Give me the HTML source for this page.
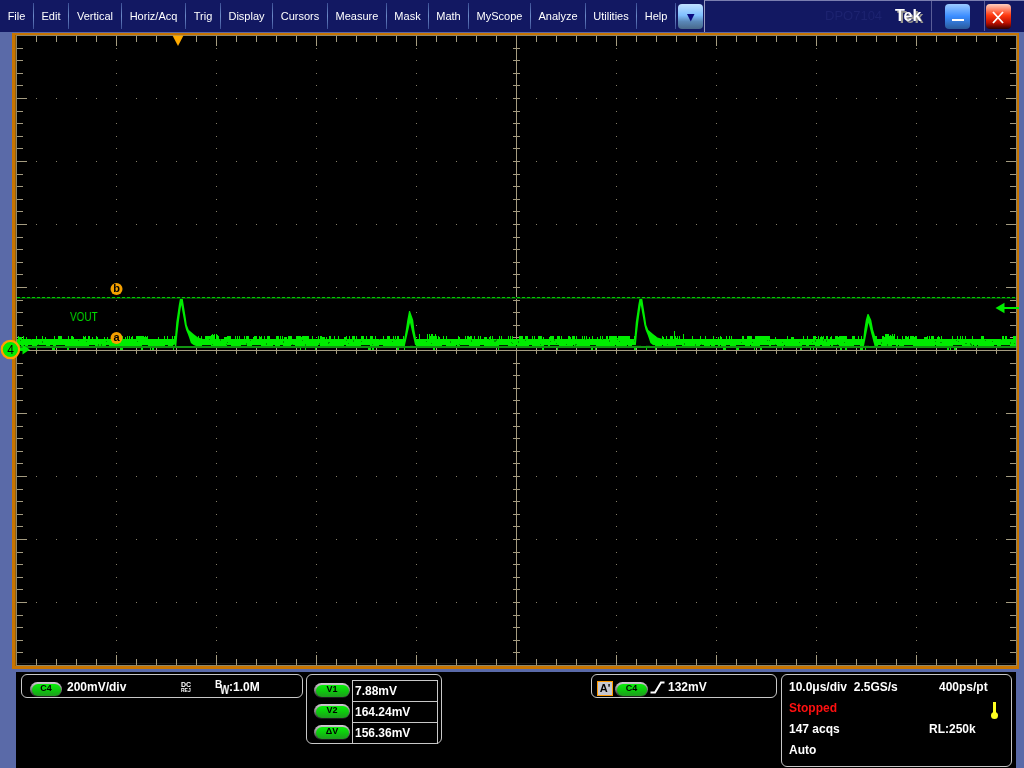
<!DOCTYPE html>
<html><head><meta charset="utf-8">
<style>
*{margin:0;padding:0;box-sizing:border-box}
html,body{width:1024px;height:768px;overflow:hidden;background:#5a6aa8;font-family:"Liberation Sans",sans-serif}
.a{position:absolute;white-space:nowrap;will-change:transform}
#menu{position:absolute;left:0;top:0;width:1024px;height:32px;background:#121862}
.mi{position:absolute;will-change:transform;top:0;height:32px;color:#fff;font-size:11px;line-height:32px;text-align:center}
.sep{position:absolute;top:3px;width:1px;height:26px;background:linear-gradient(#3c4f96,#6c8ac8 50%,#3c4f96)}
#rp{position:absolute;left:704px;top:0;width:320px;height:32px;border-top:1px solid #7a7eb0;border-left:1px solid #9a9cc0}
.wb{position:absolute;top:4px;width:25px;height:25px;border-radius:4px}
#frame{position:absolute;left:12px;top:33px;width:1007px;height:636px;background:#c77400}
#scr{position:absolute;left:16px;top:35px;width:1001px;height:631px;background:#000}
#bot{position:absolute;left:16px;top:672px;width:1000px;height:96px;background:#000}
.box{position:absolute;border:1px solid #c8c8c8;border-radius:6px}
.pill{position:absolute;height:15px;border-radius:8px;background:linear-gradient(#d4ccd4,#a8a4a8 30%,#585858 70%,#141414);padding:2px 1.5px 1px 1.5px}
.pill b{display:block;will-change:transform;height:12px;border-radius:6px;background:linear-gradient(#08f008,#10c010 60%,#209a20);color:#000;font-size:9px;font-weight:bold;text-align:center;line-height:9.5px;text-indent:-1px}
.t12{color:#fff;font-size:12px;font-weight:bold;line-height:12px}
svg{position:absolute;left:0;top:0}
</style></head><body>
<div id="menu">
<div class="mi" style="left:0;width:33px">File</div>
<div class="sep" style="left:33px"></div>
<div class="mi" style="left:34px;width:34px">Edit</div>
<div class="sep" style="left:68px"></div>
<div class="mi" style="left:69px;width:52px">Vertical</div>
<div class="sep" style="left:121px"></div>
<div class="mi" style="left:122px;width:63px">Horiz/Acq</div>
<div class="sep" style="left:185px"></div>
<div class="mi" style="left:186px;width:34px">Trig</div>
<div class="sep" style="left:220px"></div>
<div class="mi" style="left:221px;width:51px">Display</div>
<div class="sep" style="left:272px"></div>
<div class="mi" style="left:273px;width:54px">Cursors</div>
<div class="sep" style="left:327px"></div>
<div class="mi" style="left:328px;width:58px">Measure</div>
<div class="sep" style="left:386px"></div>
<div class="mi" style="left:387px;width:41px">Mask</div>
<div class="sep" style="left:428px"></div>
<div class="mi" style="left:429px;width:39px">Math</div>
<div class="sep" style="left:468px"></div>
<div class="mi" style="left:469px;width:61px">MyScope</div>
<div class="sep" style="left:530px"></div>
<div class="mi" style="left:531px;width:54px">Analyze</div>
<div class="sep" style="left:585px"></div>
<div class="mi" style="left:586px;width:50px">Utilities</div>
<div class="sep" style="left:636px"></div>
<div class="mi" style="left:637px;width:38px">Help</div>
<div class="sep" style="left:675px"></div>
<div class="wb" style="left:678px;background:linear-gradient(#c0e0ff,#80c0ff 45%,#5a88b8 70%,#48688a)"></div>
<svg width="1024" height="32"><polygon points="687,14 694.5,14 690.75,21.5" fill="#0a0a80"/></svg>
<div id="rp"></div>
<div class="a" style="left:825px;top:8px;font-size:13px;color:#1d2370;line-height:16px">DPO7104</div>
<div class="a" style="left:896.5px;top:10px;font-size:16px;font-weight:bold;color:#9a9890;line-height:16px">Tek</div>
<div class="a" style="left:894.5px;top:8px;font-size:16px;font-weight:bold;color:#fff;line-height:16px">Tek</div>
<div class="sep" style="left:931px;top:1px;height:30px;background:#5a5e98"></div>
<div class="sep" style="left:984px;top:1px;height:30px;background:#5a5e98"></div>
<div class="wb" style="left:945px;background:linear-gradient(#9ccaff,#3a8cff 50%,#2a5a9a)"></div>
<div class="a" style="left:952px;top:19px;width:12px;height:2px;background:#fff"></div>
<div class="wb" style="left:986px;background:linear-gradient(#ffd0c0,#ff3a10 45%,#c01000 75%,#300000)"></div>
<svg width="1024" height="32"><path d="M993,12 L1003,23 M1003,12 L993,23" stroke="#fff" stroke-width="1.8"/></svg>
</div>
<div id="frame"></div>
<div id="scr"></div>
<div id="bot"></div>
<svg width="1024" height="768" shape-rendering="crispEdges">
<rect x="16" y="35" width="1001" height="1" fill="#8f8668"/>
<rect x="16" y="665" width="1001" height="1" fill="#8f8668"/>
<rect x="16" y="35" width="1" height="631" fill="#8f8668"/>
<rect x="1016" y="35" width="1" height="631" fill="#8f8668"/>
<rect x="17" y="663" width="999" height="1" fill="#161616"/>
<rect x="15" y="35" width="1" height="631" fill="#94600c"/>
<rect x="16" y="350" width="1001" height="1" fill="#a59c80"/>
<rect x="516" y="35" width="1" height="631" fill="#a59c80"/>
<rect x="36" y="36" width="1" height="6" fill="#a59c80"/>
<rect x="36" y="659" width="1" height="6" fill="#a59c80"/>
<rect x="36" y="347" width="1" height="7" fill="#a59c80"/>
<rect x="56" y="36" width="1" height="6" fill="#a59c80"/>
<rect x="56" y="659" width="1" height="6" fill="#a59c80"/>
<rect x="56" y="347" width="1" height="7" fill="#a59c80"/>
<rect x="76" y="36" width="1" height="6" fill="#a59c80"/>
<rect x="76" y="659" width="1" height="6" fill="#a59c80"/>
<rect x="76" y="347" width="1" height="7" fill="#a59c80"/>
<rect x="96" y="36" width="1" height="6" fill="#a59c80"/>
<rect x="96" y="659" width="1" height="6" fill="#a59c80"/>
<rect x="96" y="347" width="1" height="7" fill="#a59c80"/>
<rect x="116" y="36" width="1" height="10" fill="#a59c80"/>
<rect x="116" y="655" width="1" height="10" fill="#a59c80"/>
<rect x="116" y="347" width="1" height="7" fill="#a59c80"/>
<rect x="136" y="36" width="1" height="6" fill="#a59c80"/>
<rect x="136" y="659" width="1" height="6" fill="#a59c80"/>
<rect x="136" y="347" width="1" height="7" fill="#a59c80"/>
<rect x="156" y="36" width="1" height="6" fill="#a59c80"/>
<rect x="156" y="659" width="1" height="6" fill="#a59c80"/>
<rect x="156" y="347" width="1" height="7" fill="#a59c80"/>
<rect x="176" y="36" width="1" height="6" fill="#a59c80"/>
<rect x="176" y="659" width="1" height="6" fill="#a59c80"/>
<rect x="176" y="347" width="1" height="7" fill="#a59c80"/>
<rect x="196" y="36" width="1" height="6" fill="#a59c80"/>
<rect x="196" y="659" width="1" height="6" fill="#a59c80"/>
<rect x="196" y="347" width="1" height="7" fill="#a59c80"/>
<rect x="216" y="36" width="1" height="10" fill="#a59c80"/>
<rect x="216" y="655" width="1" height="10" fill="#a59c80"/>
<rect x="216" y="347" width="1" height="7" fill="#a59c80"/>
<rect x="236" y="36" width="1" height="6" fill="#a59c80"/>
<rect x="236" y="659" width="1" height="6" fill="#a59c80"/>
<rect x="236" y="347" width="1" height="7" fill="#a59c80"/>
<rect x="256" y="36" width="1" height="6" fill="#a59c80"/>
<rect x="256" y="659" width="1" height="6" fill="#a59c80"/>
<rect x="256" y="347" width="1" height="7" fill="#a59c80"/>
<rect x="276" y="36" width="1" height="6" fill="#a59c80"/>
<rect x="276" y="659" width="1" height="6" fill="#a59c80"/>
<rect x="276" y="347" width="1" height="7" fill="#a59c80"/>
<rect x="296" y="36" width="1" height="6" fill="#a59c80"/>
<rect x="296" y="659" width="1" height="6" fill="#a59c80"/>
<rect x="296" y="347" width="1" height="7" fill="#a59c80"/>
<rect x="316" y="36" width="1" height="10" fill="#a59c80"/>
<rect x="316" y="655" width="1" height="10" fill="#a59c80"/>
<rect x="316" y="347" width="1" height="7" fill="#a59c80"/>
<rect x="336" y="36" width="1" height="6" fill="#a59c80"/>
<rect x="336" y="659" width="1" height="6" fill="#a59c80"/>
<rect x="336" y="347" width="1" height="7" fill="#a59c80"/>
<rect x="356" y="36" width="1" height="6" fill="#a59c80"/>
<rect x="356" y="659" width="1" height="6" fill="#a59c80"/>
<rect x="356" y="347" width="1" height="7" fill="#a59c80"/>
<rect x="376" y="36" width="1" height="6" fill="#a59c80"/>
<rect x="376" y="659" width="1" height="6" fill="#a59c80"/>
<rect x="376" y="347" width="1" height="7" fill="#a59c80"/>
<rect x="396" y="36" width="1" height="6" fill="#a59c80"/>
<rect x="396" y="659" width="1" height="6" fill="#a59c80"/>
<rect x="396" y="347" width="1" height="7" fill="#a59c80"/>
<rect x="416" y="36" width="1" height="10" fill="#a59c80"/>
<rect x="416" y="655" width="1" height="10" fill="#a59c80"/>
<rect x="416" y="347" width="1" height="7" fill="#a59c80"/>
<rect x="436" y="36" width="1" height="6" fill="#a59c80"/>
<rect x="436" y="659" width="1" height="6" fill="#a59c80"/>
<rect x="436" y="347" width="1" height="7" fill="#a59c80"/>
<rect x="456" y="36" width="1" height="6" fill="#a59c80"/>
<rect x="456" y="659" width="1" height="6" fill="#a59c80"/>
<rect x="456" y="347" width="1" height="7" fill="#a59c80"/>
<rect x="476" y="36" width="1" height="6" fill="#a59c80"/>
<rect x="476" y="659" width="1" height="6" fill="#a59c80"/>
<rect x="476" y="347" width="1" height="7" fill="#a59c80"/>
<rect x="496" y="36" width="1" height="6" fill="#a59c80"/>
<rect x="496" y="659" width="1" height="6" fill="#a59c80"/>
<rect x="496" y="347" width="1" height="7" fill="#a59c80"/>
<rect x="516" y="36" width="1" height="10" fill="#a59c80"/>
<rect x="516" y="655" width="1" height="10" fill="#a59c80"/>
<rect x="536" y="36" width="1" height="6" fill="#a59c80"/>
<rect x="536" y="659" width="1" height="6" fill="#a59c80"/>
<rect x="536" y="347" width="1" height="7" fill="#a59c80"/>
<rect x="556" y="36" width="1" height="6" fill="#a59c80"/>
<rect x="556" y="659" width="1" height="6" fill="#a59c80"/>
<rect x="556" y="347" width="1" height="7" fill="#a59c80"/>
<rect x="576" y="36" width="1" height="6" fill="#a59c80"/>
<rect x="576" y="659" width="1" height="6" fill="#a59c80"/>
<rect x="576" y="347" width="1" height="7" fill="#a59c80"/>
<rect x="596" y="36" width="1" height="6" fill="#a59c80"/>
<rect x="596" y="659" width="1" height="6" fill="#a59c80"/>
<rect x="596" y="347" width="1" height="7" fill="#a59c80"/>
<rect x="616" y="36" width="1" height="10" fill="#a59c80"/>
<rect x="616" y="655" width="1" height="10" fill="#a59c80"/>
<rect x="616" y="347" width="1" height="7" fill="#a59c80"/>
<rect x="636" y="36" width="1" height="6" fill="#a59c80"/>
<rect x="636" y="659" width="1" height="6" fill="#a59c80"/>
<rect x="636" y="347" width="1" height="7" fill="#a59c80"/>
<rect x="656" y="36" width="1" height="6" fill="#a59c80"/>
<rect x="656" y="659" width="1" height="6" fill="#a59c80"/>
<rect x="656" y="347" width="1" height="7" fill="#a59c80"/>
<rect x="676" y="36" width="1" height="6" fill="#a59c80"/>
<rect x="676" y="659" width="1" height="6" fill="#a59c80"/>
<rect x="676" y="347" width="1" height="7" fill="#a59c80"/>
<rect x="696" y="36" width="1" height="6" fill="#a59c80"/>
<rect x="696" y="659" width="1" height="6" fill="#a59c80"/>
<rect x="696" y="347" width="1" height="7" fill="#a59c80"/>
<rect x="716" y="36" width="1" height="10" fill="#a59c80"/>
<rect x="716" y="655" width="1" height="10" fill="#a59c80"/>
<rect x="716" y="347" width="1" height="7" fill="#a59c80"/>
<rect x="736" y="36" width="1" height="6" fill="#a59c80"/>
<rect x="736" y="659" width="1" height="6" fill="#a59c80"/>
<rect x="736" y="347" width="1" height="7" fill="#a59c80"/>
<rect x="756" y="36" width="1" height="6" fill="#a59c80"/>
<rect x="756" y="659" width="1" height="6" fill="#a59c80"/>
<rect x="756" y="347" width="1" height="7" fill="#a59c80"/>
<rect x="776" y="36" width="1" height="6" fill="#a59c80"/>
<rect x="776" y="659" width="1" height="6" fill="#a59c80"/>
<rect x="776" y="347" width="1" height="7" fill="#a59c80"/>
<rect x="796" y="36" width="1" height="6" fill="#a59c80"/>
<rect x="796" y="659" width="1" height="6" fill="#a59c80"/>
<rect x="796" y="347" width="1" height="7" fill="#a59c80"/>
<rect x="816" y="36" width="1" height="10" fill="#a59c80"/>
<rect x="816" y="655" width="1" height="10" fill="#a59c80"/>
<rect x="816" y="347" width="1" height="7" fill="#a59c80"/>
<rect x="836" y="36" width="1" height="6" fill="#a59c80"/>
<rect x="836" y="659" width="1" height="6" fill="#a59c80"/>
<rect x="836" y="347" width="1" height="7" fill="#a59c80"/>
<rect x="856" y="36" width="1" height="6" fill="#a59c80"/>
<rect x="856" y="659" width="1" height="6" fill="#a59c80"/>
<rect x="856" y="347" width="1" height="7" fill="#a59c80"/>
<rect x="876" y="36" width="1" height="6" fill="#a59c80"/>
<rect x="876" y="659" width="1" height="6" fill="#a59c80"/>
<rect x="876" y="347" width="1" height="7" fill="#a59c80"/>
<rect x="896" y="36" width="1" height="6" fill="#a59c80"/>
<rect x="896" y="659" width="1" height="6" fill="#a59c80"/>
<rect x="896" y="347" width="1" height="7" fill="#a59c80"/>
<rect x="916" y="36" width="1" height="10" fill="#a59c80"/>
<rect x="916" y="655" width="1" height="10" fill="#a59c80"/>
<rect x="916" y="347" width="1" height="7" fill="#a59c80"/>
<rect x="936" y="36" width="1" height="6" fill="#a59c80"/>
<rect x="936" y="659" width="1" height="6" fill="#a59c80"/>
<rect x="936" y="347" width="1" height="7" fill="#a59c80"/>
<rect x="956" y="36" width="1" height="6" fill="#a59c80"/>
<rect x="956" y="659" width="1" height="6" fill="#a59c80"/>
<rect x="956" y="347" width="1" height="7" fill="#a59c80"/>
<rect x="976" y="36" width="1" height="6" fill="#a59c80"/>
<rect x="976" y="659" width="1" height="6" fill="#a59c80"/>
<rect x="976" y="347" width="1" height="7" fill="#a59c80"/>
<rect x="996" y="36" width="1" height="6" fill="#a59c80"/>
<rect x="996" y="659" width="1" height="6" fill="#a59c80"/>
<rect x="996" y="347" width="1" height="7" fill="#a59c80"/>
<rect x="17" y="48" width="6" height="1" fill="#a59c80"/>
<rect x="1010" y="48" width="6" height="1" fill="#a59c80"/>
<rect x="513" y="48" width="7" height="1" fill="#a59c80"/>
<rect x="17" y="60" width="6" height="1" fill="#a59c80"/>
<rect x="1010" y="60" width="6" height="1" fill="#a59c80"/>
<rect x="513" y="60" width="7" height="1" fill="#a59c80"/>
<rect x="17" y="73" width="6" height="1" fill="#a59c80"/>
<rect x="1010" y="73" width="6" height="1" fill="#a59c80"/>
<rect x="513" y="73" width="7" height="1" fill="#a59c80"/>
<rect x="17" y="85" width="6" height="1" fill="#a59c80"/>
<rect x="1010" y="85" width="6" height="1" fill="#a59c80"/>
<rect x="513" y="85" width="7" height="1" fill="#a59c80"/>
<rect x="17" y="98" width="10" height="1" fill="#a59c80"/>
<rect x="1006" y="98" width="10" height="1" fill="#a59c80"/>
<rect x="513" y="98" width="7" height="1" fill="#a59c80"/>
<rect x="17" y="111" width="6" height="1" fill="#a59c80"/>
<rect x="1010" y="111" width="6" height="1" fill="#a59c80"/>
<rect x="513" y="111" width="7" height="1" fill="#a59c80"/>
<rect x="17" y="123" width="6" height="1" fill="#a59c80"/>
<rect x="1010" y="123" width="6" height="1" fill="#a59c80"/>
<rect x="513" y="123" width="7" height="1" fill="#a59c80"/>
<rect x="17" y="136" width="6" height="1" fill="#a59c80"/>
<rect x="1010" y="136" width="6" height="1" fill="#a59c80"/>
<rect x="513" y="136" width="7" height="1" fill="#a59c80"/>
<rect x="17" y="148" width="6" height="1" fill="#a59c80"/>
<rect x="1010" y="148" width="6" height="1" fill="#a59c80"/>
<rect x="513" y="148" width="7" height="1" fill="#a59c80"/>
<rect x="17" y="161" width="10" height="1" fill="#a59c80"/>
<rect x="1006" y="161" width="10" height="1" fill="#a59c80"/>
<rect x="513" y="161" width="7" height="1" fill="#a59c80"/>
<rect x="17" y="174" width="6" height="1" fill="#a59c80"/>
<rect x="1010" y="174" width="6" height="1" fill="#a59c80"/>
<rect x="513" y="174" width="7" height="1" fill="#a59c80"/>
<rect x="17" y="186" width="6" height="1" fill="#a59c80"/>
<rect x="1010" y="186" width="6" height="1" fill="#a59c80"/>
<rect x="513" y="186" width="7" height="1" fill="#a59c80"/>
<rect x="17" y="199" width="6" height="1" fill="#a59c80"/>
<rect x="1010" y="199" width="6" height="1" fill="#a59c80"/>
<rect x="513" y="199" width="7" height="1" fill="#a59c80"/>
<rect x="17" y="211" width="6" height="1" fill="#a59c80"/>
<rect x="1010" y="211" width="6" height="1" fill="#a59c80"/>
<rect x="513" y="211" width="7" height="1" fill="#a59c80"/>
<rect x="17" y="224" width="10" height="1" fill="#a59c80"/>
<rect x="1006" y="224" width="10" height="1" fill="#a59c80"/>
<rect x="513" y="224" width="7" height="1" fill="#a59c80"/>
<rect x="17" y="237" width="6" height="1" fill="#a59c80"/>
<rect x="1010" y="237" width="6" height="1" fill="#a59c80"/>
<rect x="513" y="237" width="7" height="1" fill="#a59c80"/>
<rect x="17" y="249" width="6" height="1" fill="#a59c80"/>
<rect x="1010" y="249" width="6" height="1" fill="#a59c80"/>
<rect x="513" y="249" width="7" height="1" fill="#a59c80"/>
<rect x="17" y="262" width="6" height="1" fill="#a59c80"/>
<rect x="1010" y="262" width="6" height="1" fill="#a59c80"/>
<rect x="513" y="262" width="7" height="1" fill="#a59c80"/>
<rect x="17" y="274" width="6" height="1" fill="#a59c80"/>
<rect x="1010" y="274" width="6" height="1" fill="#a59c80"/>
<rect x="513" y="274" width="7" height="1" fill="#a59c80"/>
<rect x="17" y="287" width="10" height="1" fill="#a59c80"/>
<rect x="1006" y="287" width="10" height="1" fill="#a59c80"/>
<rect x="513" y="287" width="7" height="1" fill="#a59c80"/>
<rect x="17" y="300" width="6" height="1" fill="#a59c80"/>
<rect x="1010" y="300" width="6" height="1" fill="#a59c80"/>
<rect x="513" y="300" width="7" height="1" fill="#a59c80"/>
<rect x="17" y="312" width="6" height="1" fill="#a59c80"/>
<rect x="1010" y="312" width="6" height="1" fill="#a59c80"/>
<rect x="513" y="312" width="7" height="1" fill="#a59c80"/>
<rect x="17" y="325" width="6" height="1" fill="#a59c80"/>
<rect x="1010" y="325" width="6" height="1" fill="#a59c80"/>
<rect x="513" y="325" width="7" height="1" fill="#a59c80"/>
<rect x="17" y="337" width="6" height="1" fill="#a59c80"/>
<rect x="1010" y="337" width="6" height="1" fill="#a59c80"/>
<rect x="513" y="337" width="7" height="1" fill="#a59c80"/>
<rect x="17" y="350" width="10" height="1" fill="#a59c80"/>
<rect x="1006" y="350" width="10" height="1" fill="#a59c80"/>
<rect x="17" y="363" width="6" height="1" fill="#a59c80"/>
<rect x="1010" y="363" width="6" height="1" fill="#a59c80"/>
<rect x="513" y="363" width="7" height="1" fill="#a59c80"/>
<rect x="17" y="375" width="6" height="1" fill="#a59c80"/>
<rect x="1010" y="375" width="6" height="1" fill="#a59c80"/>
<rect x="513" y="375" width="7" height="1" fill="#a59c80"/>
<rect x="17" y="388" width="6" height="1" fill="#a59c80"/>
<rect x="1010" y="388" width="6" height="1" fill="#a59c80"/>
<rect x="513" y="388" width="7" height="1" fill="#a59c80"/>
<rect x="17" y="400" width="6" height="1" fill="#a59c80"/>
<rect x="1010" y="400" width="6" height="1" fill="#a59c80"/>
<rect x="513" y="400" width="7" height="1" fill="#a59c80"/>
<rect x="17" y="413" width="10" height="1" fill="#a59c80"/>
<rect x="1006" y="413" width="10" height="1" fill="#a59c80"/>
<rect x="513" y="413" width="7" height="1" fill="#a59c80"/>
<rect x="17" y="426" width="6" height="1" fill="#a59c80"/>
<rect x="1010" y="426" width="6" height="1" fill="#a59c80"/>
<rect x="513" y="426" width="7" height="1" fill="#a59c80"/>
<rect x="17" y="438" width="6" height="1" fill="#a59c80"/>
<rect x="1010" y="438" width="6" height="1" fill="#a59c80"/>
<rect x="513" y="438" width="7" height="1" fill="#a59c80"/>
<rect x="17" y="451" width="6" height="1" fill="#a59c80"/>
<rect x="1010" y="451" width="6" height="1" fill="#a59c80"/>
<rect x="513" y="451" width="7" height="1" fill="#a59c80"/>
<rect x="17" y="463" width="6" height="1" fill="#a59c80"/>
<rect x="1010" y="463" width="6" height="1" fill="#a59c80"/>
<rect x="513" y="463" width="7" height="1" fill="#a59c80"/>
<rect x="17" y="476" width="10" height="1" fill="#a59c80"/>
<rect x="1006" y="476" width="10" height="1" fill="#a59c80"/>
<rect x="513" y="476" width="7" height="1" fill="#a59c80"/>
<rect x="17" y="489" width="6" height="1" fill="#a59c80"/>
<rect x="1010" y="489" width="6" height="1" fill="#a59c80"/>
<rect x="513" y="489" width="7" height="1" fill="#a59c80"/>
<rect x="17" y="501" width="6" height="1" fill="#a59c80"/>
<rect x="1010" y="501" width="6" height="1" fill="#a59c80"/>
<rect x="513" y="501" width="7" height="1" fill="#a59c80"/>
<rect x="17" y="514" width="6" height="1" fill="#a59c80"/>
<rect x="1010" y="514" width="6" height="1" fill="#a59c80"/>
<rect x="513" y="514" width="7" height="1" fill="#a59c80"/>
<rect x="17" y="526" width="6" height="1" fill="#a59c80"/>
<rect x="1010" y="526" width="6" height="1" fill="#a59c80"/>
<rect x="513" y="526" width="7" height="1" fill="#a59c80"/>
<rect x="17" y="539" width="10" height="1" fill="#a59c80"/>
<rect x="1006" y="539" width="10" height="1" fill="#a59c80"/>
<rect x="513" y="539" width="7" height="1" fill="#a59c80"/>
<rect x="17" y="552" width="6" height="1" fill="#a59c80"/>
<rect x="1010" y="552" width="6" height="1" fill="#a59c80"/>
<rect x="513" y="552" width="7" height="1" fill="#a59c80"/>
<rect x="17" y="564" width="6" height="1" fill="#a59c80"/>
<rect x="1010" y="564" width="6" height="1" fill="#a59c80"/>
<rect x="513" y="564" width="7" height="1" fill="#a59c80"/>
<rect x="17" y="577" width="6" height="1" fill="#a59c80"/>
<rect x="1010" y="577" width="6" height="1" fill="#a59c80"/>
<rect x="513" y="577" width="7" height="1" fill="#a59c80"/>
<rect x="17" y="589" width="6" height="1" fill="#a59c80"/>
<rect x="1010" y="589" width="6" height="1" fill="#a59c80"/>
<rect x="513" y="589" width="7" height="1" fill="#a59c80"/>
<rect x="17" y="602" width="10" height="1" fill="#a59c80"/>
<rect x="1006" y="602" width="10" height="1" fill="#a59c80"/>
<rect x="513" y="602" width="7" height="1" fill="#a59c80"/>
<rect x="17" y="615" width="6" height="1" fill="#a59c80"/>
<rect x="1010" y="615" width="6" height="1" fill="#a59c80"/>
<rect x="513" y="615" width="7" height="1" fill="#a59c80"/>
<rect x="17" y="627" width="6" height="1" fill="#a59c80"/>
<rect x="1010" y="627" width="6" height="1" fill="#a59c80"/>
<rect x="513" y="627" width="7" height="1" fill="#a59c80"/>
<rect x="17" y="640" width="6" height="1" fill="#a59c80"/>
<rect x="1010" y="640" width="6" height="1" fill="#a59c80"/>
<rect x="513" y="640" width="7" height="1" fill="#a59c80"/>
<rect x="17" y="652" width="6" height="1" fill="#a59c80"/>
<rect x="1010" y="652" width="6" height="1" fill="#a59c80"/>
<rect x="513" y="652" width="7" height="1" fill="#a59c80"/>
<rect x="116" y="48" width="1" height="1" fill="#a59c80" fill-opacity="0.8"/>
<rect x="116" y="60" width="1" height="1" fill="#a59c80" fill-opacity="0.8"/>
<rect x="116" y="73" width="1" height="1" fill="#a59c80" fill-opacity="0.8"/>
<rect x="116" y="85" width="1" height="1" fill="#a59c80" fill-opacity="0.8"/>
<rect x="116" y="111" width="1" height="1" fill="#a59c80" fill-opacity="0.8"/>
<rect x="116" y="123" width="1" height="1" fill="#a59c80" fill-opacity="0.8"/>
<rect x="116" y="136" width="1" height="1" fill="#a59c80" fill-opacity="0.8"/>
<rect x="116" y="148" width="1" height="1" fill="#a59c80" fill-opacity="0.8"/>
<rect x="116" y="174" width="1" height="1" fill="#a59c80" fill-opacity="0.8"/>
<rect x="116" y="186" width="1" height="1" fill="#a59c80" fill-opacity="0.8"/>
<rect x="116" y="199" width="1" height="1" fill="#a59c80" fill-opacity="0.8"/>
<rect x="116" y="211" width="1" height="1" fill="#a59c80" fill-opacity="0.8"/>
<rect x="116" y="237" width="1" height="1" fill="#a59c80" fill-opacity="0.8"/>
<rect x="116" y="249" width="1" height="1" fill="#a59c80" fill-opacity="0.8"/>
<rect x="116" y="262" width="1" height="1" fill="#a59c80" fill-opacity="0.8"/>
<rect x="116" y="274" width="1" height="1" fill="#a59c80" fill-opacity="0.8"/>
<rect x="116" y="300" width="1" height="1" fill="#a59c80" fill-opacity="0.8"/>
<rect x="116" y="312" width="1" height="1" fill="#a59c80" fill-opacity="0.8"/>
<rect x="116" y="325" width="1" height="1" fill="#a59c80" fill-opacity="0.8"/>
<rect x="116" y="337" width="1" height="1" fill="#a59c80" fill-opacity="0.8"/>
<rect x="116" y="350" width="1" height="1" fill="#a59c80" fill-opacity="0.8"/>
<rect x="116" y="363" width="1" height="1" fill="#a59c80" fill-opacity="0.8"/>
<rect x="116" y="375" width="1" height="1" fill="#a59c80" fill-opacity="0.8"/>
<rect x="116" y="388" width="1" height="1" fill="#a59c80" fill-opacity="0.8"/>
<rect x="116" y="400" width="1" height="1" fill="#a59c80" fill-opacity="0.8"/>
<rect x="116" y="426" width="1" height="1" fill="#a59c80" fill-opacity="0.8"/>
<rect x="116" y="438" width="1" height="1" fill="#a59c80" fill-opacity="0.8"/>
<rect x="116" y="451" width="1" height="1" fill="#a59c80" fill-opacity="0.8"/>
<rect x="116" y="463" width="1" height="1" fill="#a59c80" fill-opacity="0.8"/>
<rect x="116" y="489" width="1" height="1" fill="#a59c80" fill-opacity="0.8"/>
<rect x="116" y="501" width="1" height="1" fill="#a59c80" fill-opacity="0.8"/>
<rect x="116" y="514" width="1" height="1" fill="#a59c80" fill-opacity="0.8"/>
<rect x="116" y="526" width="1" height="1" fill="#a59c80" fill-opacity="0.8"/>
<rect x="116" y="552" width="1" height="1" fill="#a59c80" fill-opacity="0.8"/>
<rect x="116" y="564" width="1" height="1" fill="#a59c80" fill-opacity="0.8"/>
<rect x="116" y="577" width="1" height="1" fill="#a59c80" fill-opacity="0.8"/>
<rect x="116" y="589" width="1" height="1" fill="#a59c80" fill-opacity="0.8"/>
<rect x="116" y="615" width="1" height="1" fill="#a59c80" fill-opacity="0.8"/>
<rect x="116" y="627" width="1" height="1" fill="#a59c80" fill-opacity="0.8"/>
<rect x="116" y="640" width="1" height="1" fill="#a59c80" fill-opacity="0.8"/>
<rect x="116" y="652" width="1" height="1" fill="#a59c80" fill-opacity="0.8"/>
<rect x="216" y="48" width="1" height="1" fill="#a59c80" fill-opacity="0.8"/>
<rect x="216" y="60" width="1" height="1" fill="#a59c80" fill-opacity="0.8"/>
<rect x="216" y="73" width="1" height="1" fill="#a59c80" fill-opacity="0.8"/>
<rect x="216" y="85" width="1" height="1" fill="#a59c80" fill-opacity="0.8"/>
<rect x="216" y="111" width="1" height="1" fill="#a59c80" fill-opacity="0.8"/>
<rect x="216" y="123" width="1" height="1" fill="#a59c80" fill-opacity="0.8"/>
<rect x="216" y="136" width="1" height="1" fill="#a59c80" fill-opacity="0.8"/>
<rect x="216" y="148" width="1" height="1" fill="#a59c80" fill-opacity="0.8"/>
<rect x="216" y="174" width="1" height="1" fill="#a59c80" fill-opacity="0.8"/>
<rect x="216" y="186" width="1" height="1" fill="#a59c80" fill-opacity="0.8"/>
<rect x="216" y="199" width="1" height="1" fill="#a59c80" fill-opacity="0.8"/>
<rect x="216" y="211" width="1" height="1" fill="#a59c80" fill-opacity="0.8"/>
<rect x="216" y="237" width="1" height="1" fill="#a59c80" fill-opacity="0.8"/>
<rect x="216" y="249" width="1" height="1" fill="#a59c80" fill-opacity="0.8"/>
<rect x="216" y="262" width="1" height="1" fill="#a59c80" fill-opacity="0.8"/>
<rect x="216" y="274" width="1" height="1" fill="#a59c80" fill-opacity="0.8"/>
<rect x="216" y="300" width="1" height="1" fill="#a59c80" fill-opacity="0.8"/>
<rect x="216" y="312" width="1" height="1" fill="#a59c80" fill-opacity="0.8"/>
<rect x="216" y="325" width="1" height="1" fill="#a59c80" fill-opacity="0.8"/>
<rect x="216" y="337" width="1" height="1" fill="#a59c80" fill-opacity="0.8"/>
<rect x="216" y="350" width="1" height="1" fill="#a59c80" fill-opacity="0.8"/>
<rect x="216" y="363" width="1" height="1" fill="#a59c80" fill-opacity="0.8"/>
<rect x="216" y="375" width="1" height="1" fill="#a59c80" fill-opacity="0.8"/>
<rect x="216" y="388" width="1" height="1" fill="#a59c80" fill-opacity="0.8"/>
<rect x="216" y="400" width="1" height="1" fill="#a59c80" fill-opacity="0.8"/>
<rect x="216" y="426" width="1" height="1" fill="#a59c80" fill-opacity="0.8"/>
<rect x="216" y="438" width="1" height="1" fill="#a59c80" fill-opacity="0.8"/>
<rect x="216" y="451" width="1" height="1" fill="#a59c80" fill-opacity="0.8"/>
<rect x="216" y="463" width="1" height="1" fill="#a59c80" fill-opacity="0.8"/>
<rect x="216" y="489" width="1" height="1" fill="#a59c80" fill-opacity="0.8"/>
<rect x="216" y="501" width="1" height="1" fill="#a59c80" fill-opacity="0.8"/>
<rect x="216" y="514" width="1" height="1" fill="#a59c80" fill-opacity="0.8"/>
<rect x="216" y="526" width="1" height="1" fill="#a59c80" fill-opacity="0.8"/>
<rect x="216" y="552" width="1" height="1" fill="#a59c80" fill-opacity="0.8"/>
<rect x="216" y="564" width="1" height="1" fill="#a59c80" fill-opacity="0.8"/>
<rect x="216" y="577" width="1" height="1" fill="#a59c80" fill-opacity="0.8"/>
<rect x="216" y="589" width="1" height="1" fill="#a59c80" fill-opacity="0.8"/>
<rect x="216" y="615" width="1" height="1" fill="#a59c80" fill-opacity="0.8"/>
<rect x="216" y="627" width="1" height="1" fill="#a59c80" fill-opacity="0.8"/>
<rect x="216" y="640" width="1" height="1" fill="#a59c80" fill-opacity="0.8"/>
<rect x="216" y="652" width="1" height="1" fill="#a59c80" fill-opacity="0.8"/>
<rect x="316" y="48" width="1" height="1" fill="#a59c80" fill-opacity="0.8"/>
<rect x="316" y="60" width="1" height="1" fill="#a59c80" fill-opacity="0.8"/>
<rect x="316" y="73" width="1" height="1" fill="#a59c80" fill-opacity="0.8"/>
<rect x="316" y="85" width="1" height="1" fill="#a59c80" fill-opacity="0.8"/>
<rect x="316" y="111" width="1" height="1" fill="#a59c80" fill-opacity="0.8"/>
<rect x="316" y="123" width="1" height="1" fill="#a59c80" fill-opacity="0.8"/>
<rect x="316" y="136" width="1" height="1" fill="#a59c80" fill-opacity="0.8"/>
<rect x="316" y="148" width="1" height="1" fill="#a59c80" fill-opacity="0.8"/>
<rect x="316" y="174" width="1" height="1" fill="#a59c80" fill-opacity="0.8"/>
<rect x="316" y="186" width="1" height="1" fill="#a59c80" fill-opacity="0.8"/>
<rect x="316" y="199" width="1" height="1" fill="#a59c80" fill-opacity="0.8"/>
<rect x="316" y="211" width="1" height="1" fill="#a59c80" fill-opacity="0.8"/>
<rect x="316" y="237" width="1" height="1" fill="#a59c80" fill-opacity="0.8"/>
<rect x="316" y="249" width="1" height="1" fill="#a59c80" fill-opacity="0.8"/>
<rect x="316" y="262" width="1" height="1" fill="#a59c80" fill-opacity="0.8"/>
<rect x="316" y="274" width="1" height="1" fill="#a59c80" fill-opacity="0.8"/>
<rect x="316" y="300" width="1" height="1" fill="#a59c80" fill-opacity="0.8"/>
<rect x="316" y="312" width="1" height="1" fill="#a59c80" fill-opacity="0.8"/>
<rect x="316" y="325" width="1" height="1" fill="#a59c80" fill-opacity="0.8"/>
<rect x="316" y="337" width="1" height="1" fill="#a59c80" fill-opacity="0.8"/>
<rect x="316" y="350" width="1" height="1" fill="#a59c80" fill-opacity="0.8"/>
<rect x="316" y="363" width="1" height="1" fill="#a59c80" fill-opacity="0.8"/>
<rect x="316" y="375" width="1" height="1" fill="#a59c80" fill-opacity="0.8"/>
<rect x="316" y="388" width="1" height="1" fill="#a59c80" fill-opacity="0.8"/>
<rect x="316" y="400" width="1" height="1" fill="#a59c80" fill-opacity="0.8"/>
<rect x="316" y="426" width="1" height="1" fill="#a59c80" fill-opacity="0.8"/>
<rect x="316" y="438" width="1" height="1" fill="#a59c80" fill-opacity="0.8"/>
<rect x="316" y="451" width="1" height="1" fill="#a59c80" fill-opacity="0.8"/>
<rect x="316" y="463" width="1" height="1" fill="#a59c80" fill-opacity="0.8"/>
<rect x="316" y="489" width="1" height="1" fill="#a59c80" fill-opacity="0.8"/>
<rect x="316" y="501" width="1" height="1" fill="#a59c80" fill-opacity="0.8"/>
<rect x="316" y="514" width="1" height="1" fill="#a59c80" fill-opacity="0.8"/>
<rect x="316" y="526" width="1" height="1" fill="#a59c80" fill-opacity="0.8"/>
<rect x="316" y="552" width="1" height="1" fill="#a59c80" fill-opacity="0.8"/>
<rect x="316" y="564" width="1" height="1" fill="#a59c80" fill-opacity="0.8"/>
<rect x="316" y="577" width="1" height="1" fill="#a59c80" fill-opacity="0.8"/>
<rect x="316" y="589" width="1" height="1" fill="#a59c80" fill-opacity="0.8"/>
<rect x="316" y="615" width="1" height="1" fill="#a59c80" fill-opacity="0.8"/>
<rect x="316" y="627" width="1" height="1" fill="#a59c80" fill-opacity="0.8"/>
<rect x="316" y="640" width="1" height="1" fill="#a59c80" fill-opacity="0.8"/>
<rect x="316" y="652" width="1" height="1" fill="#a59c80" fill-opacity="0.8"/>
<rect x="416" y="48" width="1" height="1" fill="#a59c80" fill-opacity="0.8"/>
<rect x="416" y="60" width="1" height="1" fill="#a59c80" fill-opacity="0.8"/>
<rect x="416" y="73" width="1" height="1" fill="#a59c80" fill-opacity="0.8"/>
<rect x="416" y="85" width="1" height="1" fill="#a59c80" fill-opacity="0.8"/>
<rect x="416" y="111" width="1" height="1" fill="#a59c80" fill-opacity="0.8"/>
<rect x="416" y="123" width="1" height="1" fill="#a59c80" fill-opacity="0.8"/>
<rect x="416" y="136" width="1" height="1" fill="#a59c80" fill-opacity="0.8"/>
<rect x="416" y="148" width="1" height="1" fill="#a59c80" fill-opacity="0.8"/>
<rect x="416" y="174" width="1" height="1" fill="#a59c80" fill-opacity="0.8"/>
<rect x="416" y="186" width="1" height="1" fill="#a59c80" fill-opacity="0.8"/>
<rect x="416" y="199" width="1" height="1" fill="#a59c80" fill-opacity="0.8"/>
<rect x="416" y="211" width="1" height="1" fill="#a59c80" fill-opacity="0.8"/>
<rect x="416" y="237" width="1" height="1" fill="#a59c80" fill-opacity="0.8"/>
<rect x="416" y="249" width="1" height="1" fill="#a59c80" fill-opacity="0.8"/>
<rect x="416" y="262" width="1" height="1" fill="#a59c80" fill-opacity="0.8"/>
<rect x="416" y="274" width="1" height="1" fill="#a59c80" fill-opacity="0.8"/>
<rect x="416" y="300" width="1" height="1" fill="#a59c80" fill-opacity="0.8"/>
<rect x="416" y="312" width="1" height="1" fill="#a59c80" fill-opacity="0.8"/>
<rect x="416" y="325" width="1" height="1" fill="#a59c80" fill-opacity="0.8"/>
<rect x="416" y="337" width="1" height="1" fill="#a59c80" fill-opacity="0.8"/>
<rect x="416" y="350" width="1" height="1" fill="#a59c80" fill-opacity="0.8"/>
<rect x="416" y="363" width="1" height="1" fill="#a59c80" fill-opacity="0.8"/>
<rect x="416" y="375" width="1" height="1" fill="#a59c80" fill-opacity="0.8"/>
<rect x="416" y="388" width="1" height="1" fill="#a59c80" fill-opacity="0.8"/>
<rect x="416" y="400" width="1" height="1" fill="#a59c80" fill-opacity="0.8"/>
<rect x="416" y="426" width="1" height="1" fill="#a59c80" fill-opacity="0.8"/>
<rect x="416" y="438" width="1" height="1" fill="#a59c80" fill-opacity="0.8"/>
<rect x="416" y="451" width="1" height="1" fill="#a59c80" fill-opacity="0.8"/>
<rect x="416" y="463" width="1" height="1" fill="#a59c80" fill-opacity="0.8"/>
<rect x="416" y="489" width="1" height="1" fill="#a59c80" fill-opacity="0.8"/>
<rect x="416" y="501" width="1" height="1" fill="#a59c80" fill-opacity="0.8"/>
<rect x="416" y="514" width="1" height="1" fill="#a59c80" fill-opacity="0.8"/>
<rect x="416" y="526" width="1" height="1" fill="#a59c80" fill-opacity="0.8"/>
<rect x="416" y="552" width="1" height="1" fill="#a59c80" fill-opacity="0.8"/>
<rect x="416" y="564" width="1" height="1" fill="#a59c80" fill-opacity="0.8"/>
<rect x="416" y="577" width="1" height="1" fill="#a59c80" fill-opacity="0.8"/>
<rect x="416" y="589" width="1" height="1" fill="#a59c80" fill-opacity="0.8"/>
<rect x="416" y="615" width="1" height="1" fill="#a59c80" fill-opacity="0.8"/>
<rect x="416" y="627" width="1" height="1" fill="#a59c80" fill-opacity="0.8"/>
<rect x="416" y="640" width="1" height="1" fill="#a59c80" fill-opacity="0.8"/>
<rect x="416" y="652" width="1" height="1" fill="#a59c80" fill-opacity="0.8"/>
<rect x="616" y="48" width="1" height="1" fill="#a59c80" fill-opacity="0.8"/>
<rect x="616" y="60" width="1" height="1" fill="#a59c80" fill-opacity="0.8"/>
<rect x="616" y="73" width="1" height="1" fill="#a59c80" fill-opacity="0.8"/>
<rect x="616" y="85" width="1" height="1" fill="#a59c80" fill-opacity="0.8"/>
<rect x="616" y="111" width="1" height="1" fill="#a59c80" fill-opacity="0.8"/>
<rect x="616" y="123" width="1" height="1" fill="#a59c80" fill-opacity="0.8"/>
<rect x="616" y="136" width="1" height="1" fill="#a59c80" fill-opacity="0.8"/>
<rect x="616" y="148" width="1" height="1" fill="#a59c80" fill-opacity="0.8"/>
<rect x="616" y="174" width="1" height="1" fill="#a59c80" fill-opacity="0.8"/>
<rect x="616" y="186" width="1" height="1" fill="#a59c80" fill-opacity="0.8"/>
<rect x="616" y="199" width="1" height="1" fill="#a59c80" fill-opacity="0.8"/>
<rect x="616" y="211" width="1" height="1" fill="#a59c80" fill-opacity="0.8"/>
<rect x="616" y="237" width="1" height="1" fill="#a59c80" fill-opacity="0.8"/>
<rect x="616" y="249" width="1" height="1" fill="#a59c80" fill-opacity="0.8"/>
<rect x="616" y="262" width="1" height="1" fill="#a59c80" fill-opacity="0.8"/>
<rect x="616" y="274" width="1" height="1" fill="#a59c80" fill-opacity="0.8"/>
<rect x="616" y="300" width="1" height="1" fill="#a59c80" fill-opacity="0.8"/>
<rect x="616" y="312" width="1" height="1" fill="#a59c80" fill-opacity="0.8"/>
<rect x="616" y="325" width="1" height="1" fill="#a59c80" fill-opacity="0.8"/>
<rect x="616" y="337" width="1" height="1" fill="#a59c80" fill-opacity="0.8"/>
<rect x="616" y="350" width="1" height="1" fill="#a59c80" fill-opacity="0.8"/>
<rect x="616" y="363" width="1" height="1" fill="#a59c80" fill-opacity="0.8"/>
<rect x="616" y="375" width="1" height="1" fill="#a59c80" fill-opacity="0.8"/>
<rect x="616" y="388" width="1" height="1" fill="#a59c80" fill-opacity="0.8"/>
<rect x="616" y="400" width="1" height="1" fill="#a59c80" fill-opacity="0.8"/>
<rect x="616" y="426" width="1" height="1" fill="#a59c80" fill-opacity="0.8"/>
<rect x="616" y="438" width="1" height="1" fill="#a59c80" fill-opacity="0.8"/>
<rect x="616" y="451" width="1" height="1" fill="#a59c80" fill-opacity="0.8"/>
<rect x="616" y="463" width="1" height="1" fill="#a59c80" fill-opacity="0.8"/>
<rect x="616" y="489" width="1" height="1" fill="#a59c80" fill-opacity="0.8"/>
<rect x="616" y="501" width="1" height="1" fill="#a59c80" fill-opacity="0.8"/>
<rect x="616" y="514" width="1" height="1" fill="#a59c80" fill-opacity="0.8"/>
<rect x="616" y="526" width="1" height="1" fill="#a59c80" fill-opacity="0.8"/>
<rect x="616" y="552" width="1" height="1" fill="#a59c80" fill-opacity="0.8"/>
<rect x="616" y="564" width="1" height="1" fill="#a59c80" fill-opacity="0.8"/>
<rect x="616" y="577" width="1" height="1" fill="#a59c80" fill-opacity="0.8"/>
<rect x="616" y="589" width="1" height="1" fill="#a59c80" fill-opacity="0.8"/>
<rect x="616" y="615" width="1" height="1" fill="#a59c80" fill-opacity="0.8"/>
<rect x="616" y="627" width="1" height="1" fill="#a59c80" fill-opacity="0.8"/>
<rect x="616" y="640" width="1" height="1" fill="#a59c80" fill-opacity="0.8"/>
<rect x="616" y="652" width="1" height="1" fill="#a59c80" fill-opacity="0.8"/>
<rect x="716" y="48" width="1" height="1" fill="#a59c80" fill-opacity="0.8"/>
<rect x="716" y="60" width="1" height="1" fill="#a59c80" fill-opacity="0.8"/>
<rect x="716" y="73" width="1" height="1" fill="#a59c80" fill-opacity="0.8"/>
<rect x="716" y="85" width="1" height="1" fill="#a59c80" fill-opacity="0.8"/>
<rect x="716" y="111" width="1" height="1" fill="#a59c80" fill-opacity="0.8"/>
<rect x="716" y="123" width="1" height="1" fill="#a59c80" fill-opacity="0.8"/>
<rect x="716" y="136" width="1" height="1" fill="#a59c80" fill-opacity="0.8"/>
<rect x="716" y="148" width="1" height="1" fill="#a59c80" fill-opacity="0.8"/>
<rect x="716" y="174" width="1" height="1" fill="#a59c80" fill-opacity="0.8"/>
<rect x="716" y="186" width="1" height="1" fill="#a59c80" fill-opacity="0.8"/>
<rect x="716" y="199" width="1" height="1" fill="#a59c80" fill-opacity="0.8"/>
<rect x="716" y="211" width="1" height="1" fill="#a59c80" fill-opacity="0.8"/>
<rect x="716" y="237" width="1" height="1" fill="#a59c80" fill-opacity="0.8"/>
<rect x="716" y="249" width="1" height="1" fill="#a59c80" fill-opacity="0.8"/>
<rect x="716" y="262" width="1" height="1" fill="#a59c80" fill-opacity="0.8"/>
<rect x="716" y="274" width="1" height="1" fill="#a59c80" fill-opacity="0.8"/>
<rect x="716" y="300" width="1" height="1" fill="#a59c80" fill-opacity="0.8"/>
<rect x="716" y="312" width="1" height="1" fill="#a59c80" fill-opacity="0.8"/>
<rect x="716" y="325" width="1" height="1" fill="#a59c80" fill-opacity="0.8"/>
<rect x="716" y="337" width="1" height="1" fill="#a59c80" fill-opacity="0.8"/>
<rect x="716" y="350" width="1" height="1" fill="#a59c80" fill-opacity="0.8"/>
<rect x="716" y="363" width="1" height="1" fill="#a59c80" fill-opacity="0.8"/>
<rect x="716" y="375" width="1" height="1" fill="#a59c80" fill-opacity="0.8"/>
<rect x="716" y="388" width="1" height="1" fill="#a59c80" fill-opacity="0.8"/>
<rect x="716" y="400" width="1" height="1" fill="#a59c80" fill-opacity="0.8"/>
<rect x="716" y="426" width="1" height="1" fill="#a59c80" fill-opacity="0.8"/>
<rect x="716" y="438" width="1" height="1" fill="#a59c80" fill-opacity="0.8"/>
<rect x="716" y="451" width="1" height="1" fill="#a59c80" fill-opacity="0.8"/>
<rect x="716" y="463" width="1" height="1" fill="#a59c80" fill-opacity="0.8"/>
<rect x="716" y="489" width="1" height="1" fill="#a59c80" fill-opacity="0.8"/>
<rect x="716" y="501" width="1" height="1" fill="#a59c80" fill-opacity="0.8"/>
<rect x="716" y="514" width="1" height="1" fill="#a59c80" fill-opacity="0.8"/>
<rect x="716" y="526" width="1" height="1" fill="#a59c80" fill-opacity="0.8"/>
<rect x="716" y="552" width="1" height="1" fill="#a59c80" fill-opacity="0.8"/>
<rect x="716" y="564" width="1" height="1" fill="#a59c80" fill-opacity="0.8"/>
<rect x="716" y="577" width="1" height="1" fill="#a59c80" fill-opacity="0.8"/>
<rect x="716" y="589" width="1" height="1" fill="#a59c80" fill-opacity="0.8"/>
<rect x="716" y="615" width="1" height="1" fill="#a59c80" fill-opacity="0.8"/>
<rect x="716" y="627" width="1" height="1" fill="#a59c80" fill-opacity="0.8"/>
<rect x="716" y="640" width="1" height="1" fill="#a59c80" fill-opacity="0.8"/>
<rect x="716" y="652" width="1" height="1" fill="#a59c80" fill-opacity="0.8"/>
<rect x="816" y="48" width="1" height="1" fill="#a59c80" fill-opacity="0.8"/>
<rect x="816" y="60" width="1" height="1" fill="#a59c80" fill-opacity="0.8"/>
<rect x="816" y="73" width="1" height="1" fill="#a59c80" fill-opacity="0.8"/>
<rect x="816" y="85" width="1" height="1" fill="#a59c80" fill-opacity="0.8"/>
<rect x="816" y="111" width="1" height="1" fill="#a59c80" fill-opacity="0.8"/>
<rect x="816" y="123" width="1" height="1" fill="#a59c80" fill-opacity="0.8"/>
<rect x="816" y="136" width="1" height="1" fill="#a59c80" fill-opacity="0.8"/>
<rect x="816" y="148" width="1" height="1" fill="#a59c80" fill-opacity="0.8"/>
<rect x="816" y="174" width="1" height="1" fill="#a59c80" fill-opacity="0.8"/>
<rect x="816" y="186" width="1" height="1" fill="#a59c80" fill-opacity="0.8"/>
<rect x="816" y="199" width="1" height="1" fill="#a59c80" fill-opacity="0.8"/>
<rect x="816" y="211" width="1" height="1" fill="#a59c80" fill-opacity="0.8"/>
<rect x="816" y="237" width="1" height="1" fill="#a59c80" fill-opacity="0.8"/>
<rect x="816" y="249" width="1" height="1" fill="#a59c80" fill-opacity="0.8"/>
<rect x="816" y="262" width="1" height="1" fill="#a59c80" fill-opacity="0.8"/>
<rect x="816" y="274" width="1" height="1" fill="#a59c80" fill-opacity="0.8"/>
<rect x="816" y="300" width="1" height="1" fill="#a59c80" fill-opacity="0.8"/>
<rect x="816" y="312" width="1" height="1" fill="#a59c80" fill-opacity="0.8"/>
<rect x="816" y="325" width="1" height="1" fill="#a59c80" fill-opacity="0.8"/>
<rect x="816" y="337" width="1" height="1" fill="#a59c80" fill-opacity="0.8"/>
<rect x="816" y="350" width="1" height="1" fill="#a59c80" fill-opacity="0.8"/>
<rect x="816" y="363" width="1" height="1" fill="#a59c80" fill-opacity="0.8"/>
<rect x="816" y="375" width="1" height="1" fill="#a59c80" fill-opacity="0.8"/>
<rect x="816" y="388" width="1" height="1" fill="#a59c80" fill-opacity="0.8"/>
<rect x="816" y="400" width="1" height="1" fill="#a59c80" fill-opacity="0.8"/>
<rect x="816" y="426" width="1" height="1" fill="#a59c80" fill-opacity="0.8"/>
<rect x="816" y="438" width="1" height="1" fill="#a59c80" fill-opacity="0.8"/>
<rect x="816" y="451" width="1" height="1" fill="#a59c80" fill-opacity="0.8"/>
<rect x="816" y="463" width="1" height="1" fill="#a59c80" fill-opacity="0.8"/>
<rect x="816" y="489" width="1" height="1" fill="#a59c80" fill-opacity="0.8"/>
<rect x="816" y="501" width="1" height="1" fill="#a59c80" fill-opacity="0.8"/>
<rect x="816" y="514" width="1" height="1" fill="#a59c80" fill-opacity="0.8"/>
<rect x="816" y="526" width="1" height="1" fill="#a59c80" fill-opacity="0.8"/>
<rect x="816" y="552" width="1" height="1" fill="#a59c80" fill-opacity="0.8"/>
<rect x="816" y="564" width="1" height="1" fill="#a59c80" fill-opacity="0.8"/>
<rect x="816" y="577" width="1" height="1" fill="#a59c80" fill-opacity="0.8"/>
<rect x="816" y="589" width="1" height="1" fill="#a59c80" fill-opacity="0.8"/>
<rect x="816" y="615" width="1" height="1" fill="#a59c80" fill-opacity="0.8"/>
<rect x="816" y="627" width="1" height="1" fill="#a59c80" fill-opacity="0.8"/>
<rect x="816" y="640" width="1" height="1" fill="#a59c80" fill-opacity="0.8"/>
<rect x="816" y="652" width="1" height="1" fill="#a59c80" fill-opacity="0.8"/>
<rect x="916" y="48" width="1" height="1" fill="#a59c80" fill-opacity="0.8"/>
<rect x="916" y="60" width="1" height="1" fill="#a59c80" fill-opacity="0.8"/>
<rect x="916" y="73" width="1" height="1" fill="#a59c80" fill-opacity="0.8"/>
<rect x="916" y="85" width="1" height="1" fill="#a59c80" fill-opacity="0.8"/>
<rect x="916" y="111" width="1" height="1" fill="#a59c80" fill-opacity="0.8"/>
<rect x="916" y="123" width="1" height="1" fill="#a59c80" fill-opacity="0.8"/>
<rect x="916" y="136" width="1" height="1" fill="#a59c80" fill-opacity="0.8"/>
<rect x="916" y="148" width="1" height="1" fill="#a59c80" fill-opacity="0.8"/>
<rect x="916" y="174" width="1" height="1" fill="#a59c80" fill-opacity="0.8"/>
<rect x="916" y="186" width="1" height="1" fill="#a59c80" fill-opacity="0.8"/>
<rect x="916" y="199" width="1" height="1" fill="#a59c80" fill-opacity="0.8"/>
<rect x="916" y="211" width="1" height="1" fill="#a59c80" fill-opacity="0.8"/>
<rect x="916" y="237" width="1" height="1" fill="#a59c80" fill-opacity="0.8"/>
<rect x="916" y="249" width="1" height="1" fill="#a59c80" fill-opacity="0.8"/>
<rect x="916" y="262" width="1" height="1" fill="#a59c80" fill-opacity="0.8"/>
<rect x="916" y="274" width="1" height="1" fill="#a59c80" fill-opacity="0.8"/>
<rect x="916" y="300" width="1" height="1" fill="#a59c80" fill-opacity="0.8"/>
<rect x="916" y="312" width="1" height="1" fill="#a59c80" fill-opacity="0.8"/>
<rect x="916" y="325" width="1" height="1" fill="#a59c80" fill-opacity="0.8"/>
<rect x="916" y="337" width="1" height="1" fill="#a59c80" fill-opacity="0.8"/>
<rect x="916" y="350" width="1" height="1" fill="#a59c80" fill-opacity="0.8"/>
<rect x="916" y="363" width="1" height="1" fill="#a59c80" fill-opacity="0.8"/>
<rect x="916" y="375" width="1" height="1" fill="#a59c80" fill-opacity="0.8"/>
<rect x="916" y="388" width="1" height="1" fill="#a59c80" fill-opacity="0.8"/>
<rect x="916" y="400" width="1" height="1" fill="#a59c80" fill-opacity="0.8"/>
<rect x="916" y="426" width="1" height="1" fill="#a59c80" fill-opacity="0.8"/>
<rect x="916" y="438" width="1" height="1" fill="#a59c80" fill-opacity="0.8"/>
<rect x="916" y="451" width="1" height="1" fill="#a59c80" fill-opacity="0.8"/>
<rect x="916" y="463" width="1" height="1" fill="#a59c80" fill-opacity="0.8"/>
<rect x="916" y="489" width="1" height="1" fill="#a59c80" fill-opacity="0.8"/>
<rect x="916" y="501" width="1" height="1" fill="#a59c80" fill-opacity="0.8"/>
<rect x="916" y="514" width="1" height="1" fill="#a59c80" fill-opacity="0.8"/>
<rect x="916" y="526" width="1" height="1" fill="#a59c80" fill-opacity="0.8"/>
<rect x="916" y="552" width="1" height="1" fill="#a59c80" fill-opacity="0.8"/>
<rect x="916" y="564" width="1" height="1" fill="#a59c80" fill-opacity="0.8"/>
<rect x="916" y="577" width="1" height="1" fill="#a59c80" fill-opacity="0.8"/>
<rect x="916" y="589" width="1" height="1" fill="#a59c80" fill-opacity="0.8"/>
<rect x="916" y="615" width="1" height="1" fill="#a59c80" fill-opacity="0.8"/>
<rect x="916" y="627" width="1" height="1" fill="#a59c80" fill-opacity="0.8"/>
<rect x="916" y="640" width="1" height="1" fill="#a59c80" fill-opacity="0.8"/>
<rect x="916" y="652" width="1" height="1" fill="#a59c80" fill-opacity="0.8"/>
<rect x="36" y="98" width="1" height="1" fill="#a59c80" fill-opacity="0.8"/>
<rect x="56" y="98" width="1" height="1" fill="#a59c80" fill-opacity="0.8"/>
<rect x="76" y="98" width="1" height="1" fill="#a59c80" fill-opacity="0.8"/>
<rect x="96" y="98" width="1" height="1" fill="#a59c80" fill-opacity="0.8"/>
<rect x="116" y="98" width="1" height="1" fill="#a59c80" fill-opacity="0.8"/>
<rect x="136" y="98" width="1" height="1" fill="#a59c80" fill-opacity="0.8"/>
<rect x="156" y="98" width="1" height="1" fill="#a59c80" fill-opacity="0.8"/>
<rect x="176" y="98" width="1" height="1" fill="#a59c80" fill-opacity="0.8"/>
<rect x="196" y="98" width="1" height="1" fill="#a59c80" fill-opacity="0.8"/>
<rect x="216" y="98" width="1" height="1" fill="#a59c80" fill-opacity="0.8"/>
<rect x="236" y="98" width="1" height="1" fill="#a59c80" fill-opacity="0.8"/>
<rect x="256" y="98" width="1" height="1" fill="#a59c80" fill-opacity="0.8"/>
<rect x="276" y="98" width="1" height="1" fill="#a59c80" fill-opacity="0.8"/>
<rect x="296" y="98" width="1" height="1" fill="#a59c80" fill-opacity="0.8"/>
<rect x="316" y="98" width="1" height="1" fill="#a59c80" fill-opacity="0.8"/>
<rect x="336" y="98" width="1" height="1" fill="#a59c80" fill-opacity="0.8"/>
<rect x="356" y="98" width="1" height="1" fill="#a59c80" fill-opacity="0.8"/>
<rect x="376" y="98" width="1" height="1" fill="#a59c80" fill-opacity="0.8"/>
<rect x="396" y="98" width="1" height="1" fill="#a59c80" fill-opacity="0.8"/>
<rect x="416" y="98" width="1" height="1" fill="#a59c80" fill-opacity="0.8"/>
<rect x="436" y="98" width="1" height="1" fill="#a59c80" fill-opacity="0.8"/>
<rect x="456" y="98" width="1" height="1" fill="#a59c80" fill-opacity="0.8"/>
<rect x="476" y="98" width="1" height="1" fill="#a59c80" fill-opacity="0.8"/>
<rect x="496" y="98" width="1" height="1" fill="#a59c80" fill-opacity="0.8"/>
<rect x="516" y="98" width="1" height="1" fill="#a59c80" fill-opacity="0.8"/>
<rect x="536" y="98" width="1" height="1" fill="#a59c80" fill-opacity="0.8"/>
<rect x="556" y="98" width="1" height="1" fill="#a59c80" fill-opacity="0.8"/>
<rect x="576" y="98" width="1" height="1" fill="#a59c80" fill-opacity="0.8"/>
<rect x="596" y="98" width="1" height="1" fill="#a59c80" fill-opacity="0.8"/>
<rect x="616" y="98" width="1" height="1" fill="#a59c80" fill-opacity="0.8"/>
<rect x="636" y="98" width="1" height="1" fill="#a59c80" fill-opacity="0.8"/>
<rect x="656" y="98" width="1" height="1" fill="#a59c80" fill-opacity="0.8"/>
<rect x="676" y="98" width="1" height="1" fill="#a59c80" fill-opacity="0.8"/>
<rect x="696" y="98" width="1" height="1" fill="#a59c80" fill-opacity="0.8"/>
<rect x="716" y="98" width="1" height="1" fill="#a59c80" fill-opacity="0.8"/>
<rect x="736" y="98" width="1" height="1" fill="#a59c80" fill-opacity="0.8"/>
<rect x="756" y="98" width="1" height="1" fill="#a59c80" fill-opacity="0.8"/>
<rect x="776" y="98" width="1" height="1" fill="#a59c80" fill-opacity="0.8"/>
<rect x="796" y="98" width="1" height="1" fill="#a59c80" fill-opacity="0.8"/>
<rect x="816" y="98" width="1" height="1" fill="#a59c80" fill-opacity="0.8"/>
<rect x="836" y="98" width="1" height="1" fill="#a59c80" fill-opacity="0.8"/>
<rect x="856" y="98" width="1" height="1" fill="#a59c80" fill-opacity="0.8"/>
<rect x="876" y="98" width="1" height="1" fill="#a59c80" fill-opacity="0.8"/>
<rect x="896" y="98" width="1" height="1" fill="#a59c80" fill-opacity="0.8"/>
<rect x="916" y="98" width="1" height="1" fill="#a59c80" fill-opacity="0.8"/>
<rect x="936" y="98" width="1" height="1" fill="#a59c80" fill-opacity="0.8"/>
<rect x="956" y="98" width="1" height="1" fill="#a59c80" fill-opacity="0.8"/>
<rect x="976" y="98" width="1" height="1" fill="#a59c80" fill-opacity="0.8"/>
<rect x="996" y="98" width="1" height="1" fill="#a59c80" fill-opacity="0.8"/>
<rect x="36" y="161" width="1" height="1" fill="#a59c80" fill-opacity="0.8"/>
<rect x="56" y="161" width="1" height="1" fill="#a59c80" fill-opacity="0.8"/>
<rect x="76" y="161" width="1" height="1" fill="#a59c80" fill-opacity="0.8"/>
<rect x="96" y="161" width="1" height="1" fill="#a59c80" fill-opacity="0.8"/>
<rect x="116" y="161" width="1" height="1" fill="#a59c80" fill-opacity="0.8"/>
<rect x="136" y="161" width="1" height="1" fill="#a59c80" fill-opacity="0.8"/>
<rect x="156" y="161" width="1" height="1" fill="#a59c80" fill-opacity="0.8"/>
<rect x="176" y="161" width="1" height="1" fill="#a59c80" fill-opacity="0.8"/>
<rect x="196" y="161" width="1" height="1" fill="#a59c80" fill-opacity="0.8"/>
<rect x="216" y="161" width="1" height="1" fill="#a59c80" fill-opacity="0.8"/>
<rect x="236" y="161" width="1" height="1" fill="#a59c80" fill-opacity="0.8"/>
<rect x="256" y="161" width="1" height="1" fill="#a59c80" fill-opacity="0.8"/>
<rect x="276" y="161" width="1" height="1" fill="#a59c80" fill-opacity="0.8"/>
<rect x="296" y="161" width="1" height="1" fill="#a59c80" fill-opacity="0.8"/>
<rect x="316" y="161" width="1" height="1" fill="#a59c80" fill-opacity="0.8"/>
<rect x="336" y="161" width="1" height="1" fill="#a59c80" fill-opacity="0.8"/>
<rect x="356" y="161" width="1" height="1" fill="#a59c80" fill-opacity="0.8"/>
<rect x="376" y="161" width="1" height="1" fill="#a59c80" fill-opacity="0.8"/>
<rect x="396" y="161" width="1" height="1" fill="#a59c80" fill-opacity="0.8"/>
<rect x="416" y="161" width="1" height="1" fill="#a59c80" fill-opacity="0.8"/>
<rect x="436" y="161" width="1" height="1" fill="#a59c80" fill-opacity="0.8"/>
<rect x="456" y="161" width="1" height="1" fill="#a59c80" fill-opacity="0.8"/>
<rect x="476" y="161" width="1" height="1" fill="#a59c80" fill-opacity="0.8"/>
<rect x="496" y="161" width="1" height="1" fill="#a59c80" fill-opacity="0.8"/>
<rect x="516" y="161" width="1" height="1" fill="#a59c80" fill-opacity="0.8"/>
<rect x="536" y="161" width="1" height="1" fill="#a59c80" fill-opacity="0.8"/>
<rect x="556" y="161" width="1" height="1" fill="#a59c80" fill-opacity="0.8"/>
<rect x="576" y="161" width="1" height="1" fill="#a59c80" fill-opacity="0.8"/>
<rect x="596" y="161" width="1" height="1" fill="#a59c80" fill-opacity="0.8"/>
<rect x="616" y="161" width="1" height="1" fill="#a59c80" fill-opacity="0.8"/>
<rect x="636" y="161" width="1" height="1" fill="#a59c80" fill-opacity="0.8"/>
<rect x="656" y="161" width="1" height="1" fill="#a59c80" fill-opacity="0.8"/>
<rect x="676" y="161" width="1" height="1" fill="#a59c80" fill-opacity="0.8"/>
<rect x="696" y="161" width="1" height="1" fill="#a59c80" fill-opacity="0.8"/>
<rect x="716" y="161" width="1" height="1" fill="#a59c80" fill-opacity="0.8"/>
<rect x="736" y="161" width="1" height="1" fill="#a59c80" fill-opacity="0.8"/>
<rect x="756" y="161" width="1" height="1" fill="#a59c80" fill-opacity="0.8"/>
<rect x="776" y="161" width="1" height="1" fill="#a59c80" fill-opacity="0.8"/>
<rect x="796" y="161" width="1" height="1" fill="#a59c80" fill-opacity="0.8"/>
<rect x="816" y="161" width="1" height="1" fill="#a59c80" fill-opacity="0.8"/>
<rect x="836" y="161" width="1" height="1" fill="#a59c80" fill-opacity="0.8"/>
<rect x="856" y="161" width="1" height="1" fill="#a59c80" fill-opacity="0.8"/>
<rect x="876" y="161" width="1" height="1" fill="#a59c80" fill-opacity="0.8"/>
<rect x="896" y="161" width="1" height="1" fill="#a59c80" fill-opacity="0.8"/>
<rect x="916" y="161" width="1" height="1" fill="#a59c80" fill-opacity="0.8"/>
<rect x="936" y="161" width="1" height="1" fill="#a59c80" fill-opacity="0.8"/>
<rect x="956" y="161" width="1" height="1" fill="#a59c80" fill-opacity="0.8"/>
<rect x="976" y="161" width="1" height="1" fill="#a59c80" fill-opacity="0.8"/>
<rect x="996" y="161" width="1" height="1" fill="#a59c80" fill-opacity="0.8"/>
<rect x="36" y="224" width="1" height="1" fill="#a59c80" fill-opacity="0.8"/>
<rect x="56" y="224" width="1" height="1" fill="#a59c80" fill-opacity="0.8"/>
<rect x="76" y="224" width="1" height="1" fill="#a59c80" fill-opacity="0.8"/>
<rect x="96" y="224" width="1" height="1" fill="#a59c80" fill-opacity="0.8"/>
<rect x="116" y="224" width="1" height="1" fill="#a59c80" fill-opacity="0.8"/>
<rect x="136" y="224" width="1" height="1" fill="#a59c80" fill-opacity="0.8"/>
<rect x="156" y="224" width="1" height="1" fill="#a59c80" fill-opacity="0.8"/>
<rect x="176" y="224" width="1" height="1" fill="#a59c80" fill-opacity="0.8"/>
<rect x="196" y="224" width="1" height="1" fill="#a59c80" fill-opacity="0.8"/>
<rect x="216" y="224" width="1" height="1" fill="#a59c80" fill-opacity="0.8"/>
<rect x="236" y="224" width="1" height="1" fill="#a59c80" fill-opacity="0.8"/>
<rect x="256" y="224" width="1" height="1" fill="#a59c80" fill-opacity="0.8"/>
<rect x="276" y="224" width="1" height="1" fill="#a59c80" fill-opacity="0.8"/>
<rect x="296" y="224" width="1" height="1" fill="#a59c80" fill-opacity="0.8"/>
<rect x="316" y="224" width="1" height="1" fill="#a59c80" fill-opacity="0.8"/>
<rect x="336" y="224" width="1" height="1" fill="#a59c80" fill-opacity="0.8"/>
<rect x="356" y="224" width="1" height="1" fill="#a59c80" fill-opacity="0.8"/>
<rect x="376" y="224" width="1" height="1" fill="#a59c80" fill-opacity="0.8"/>
<rect x="396" y="224" width="1" height="1" fill="#a59c80" fill-opacity="0.8"/>
<rect x="416" y="224" width="1" height="1" fill="#a59c80" fill-opacity="0.8"/>
<rect x="436" y="224" width="1" height="1" fill="#a59c80" fill-opacity="0.8"/>
<rect x="456" y="224" width="1" height="1" fill="#a59c80" fill-opacity="0.8"/>
<rect x="476" y="224" width="1" height="1" fill="#a59c80" fill-opacity="0.8"/>
<rect x="496" y="224" width="1" height="1" fill="#a59c80" fill-opacity="0.8"/>
<rect x="516" y="224" width="1" height="1" fill="#a59c80" fill-opacity="0.8"/>
<rect x="536" y="224" width="1" height="1" fill="#a59c80" fill-opacity="0.8"/>
<rect x="556" y="224" width="1" height="1" fill="#a59c80" fill-opacity="0.8"/>
<rect x="576" y="224" width="1" height="1" fill="#a59c80" fill-opacity="0.8"/>
<rect x="596" y="224" width="1" height="1" fill="#a59c80" fill-opacity="0.8"/>
<rect x="616" y="224" width="1" height="1" fill="#a59c80" fill-opacity="0.8"/>
<rect x="636" y="224" width="1" height="1" fill="#a59c80" fill-opacity="0.8"/>
<rect x="656" y="224" width="1" height="1" fill="#a59c80" fill-opacity="0.8"/>
<rect x="676" y="224" width="1" height="1" fill="#a59c80" fill-opacity="0.8"/>
<rect x="696" y="224" width="1" height="1" fill="#a59c80" fill-opacity="0.8"/>
<rect x="716" y="224" width="1" height="1" fill="#a59c80" fill-opacity="0.8"/>
<rect x="736" y="224" width="1" height="1" fill="#a59c80" fill-opacity="0.8"/>
<rect x="756" y="224" width="1" height="1" fill="#a59c80" fill-opacity="0.8"/>
<rect x="776" y="224" width="1" height="1" fill="#a59c80" fill-opacity="0.8"/>
<rect x="796" y="224" width="1" height="1" fill="#a59c80" fill-opacity="0.8"/>
<rect x="816" y="224" width="1" height="1" fill="#a59c80" fill-opacity="0.8"/>
<rect x="836" y="224" width="1" height="1" fill="#a59c80" fill-opacity="0.8"/>
<rect x="856" y="224" width="1" height="1" fill="#a59c80" fill-opacity="0.8"/>
<rect x="876" y="224" width="1" height="1" fill="#a59c80" fill-opacity="0.8"/>
<rect x="896" y="224" width="1" height="1" fill="#a59c80" fill-opacity="0.8"/>
<rect x="916" y="224" width="1" height="1" fill="#a59c80" fill-opacity="0.8"/>
<rect x="936" y="224" width="1" height="1" fill="#a59c80" fill-opacity="0.8"/>
<rect x="956" y="224" width="1" height="1" fill="#a59c80" fill-opacity="0.8"/>
<rect x="976" y="224" width="1" height="1" fill="#a59c80" fill-opacity="0.8"/>
<rect x="996" y="224" width="1" height="1" fill="#a59c80" fill-opacity="0.8"/>
<rect x="36" y="287" width="1" height="1" fill="#a59c80" fill-opacity="0.8"/>
<rect x="56" y="287" width="1" height="1" fill="#a59c80" fill-opacity="0.8"/>
<rect x="76" y="287" width="1" height="1" fill="#a59c80" fill-opacity="0.8"/>
<rect x="96" y="287" width="1" height="1" fill="#a59c80" fill-opacity="0.8"/>
<rect x="116" y="287" width="1" height="1" fill="#a59c80" fill-opacity="0.8"/>
<rect x="136" y="287" width="1" height="1" fill="#a59c80" fill-opacity="0.8"/>
<rect x="156" y="287" width="1" height="1" fill="#a59c80" fill-opacity="0.8"/>
<rect x="176" y="287" width="1" height="1" fill="#a59c80" fill-opacity="0.8"/>
<rect x="196" y="287" width="1" height="1" fill="#a59c80" fill-opacity="0.8"/>
<rect x="216" y="287" width="1" height="1" fill="#a59c80" fill-opacity="0.8"/>
<rect x="236" y="287" width="1" height="1" fill="#a59c80" fill-opacity="0.8"/>
<rect x="256" y="287" width="1" height="1" fill="#a59c80" fill-opacity="0.8"/>
<rect x="276" y="287" width="1" height="1" fill="#a59c80" fill-opacity="0.8"/>
<rect x="296" y="287" width="1" height="1" fill="#a59c80" fill-opacity="0.8"/>
<rect x="316" y="287" width="1" height="1" fill="#a59c80" fill-opacity="0.8"/>
<rect x="336" y="287" width="1" height="1" fill="#a59c80" fill-opacity="0.8"/>
<rect x="356" y="287" width="1" height="1" fill="#a59c80" fill-opacity="0.8"/>
<rect x="376" y="287" width="1" height="1" fill="#a59c80" fill-opacity="0.8"/>
<rect x="396" y="287" width="1" height="1" fill="#a59c80" fill-opacity="0.8"/>
<rect x="416" y="287" width="1" height="1" fill="#a59c80" fill-opacity="0.8"/>
<rect x="436" y="287" width="1" height="1" fill="#a59c80" fill-opacity="0.8"/>
<rect x="456" y="287" width="1" height="1" fill="#a59c80" fill-opacity="0.8"/>
<rect x="476" y="287" width="1" height="1" fill="#a59c80" fill-opacity="0.8"/>
<rect x="496" y="287" width="1" height="1" fill="#a59c80" fill-opacity="0.8"/>
<rect x="516" y="287" width="1" height="1" fill="#a59c80" fill-opacity="0.8"/>
<rect x="536" y="287" width="1" height="1" fill="#a59c80" fill-opacity="0.8"/>
<rect x="556" y="287" width="1" height="1" fill="#a59c80" fill-opacity="0.8"/>
<rect x="576" y="287" width="1" height="1" fill="#a59c80" fill-opacity="0.8"/>
<rect x="596" y="287" width="1" height="1" fill="#a59c80" fill-opacity="0.8"/>
<rect x="616" y="287" width="1" height="1" fill="#a59c80" fill-opacity="0.8"/>
<rect x="636" y="287" width="1" height="1" fill="#a59c80" fill-opacity="0.8"/>
<rect x="656" y="287" width="1" height="1" fill="#a59c80" fill-opacity="0.8"/>
<rect x="676" y="287" width="1" height="1" fill="#a59c80" fill-opacity="0.8"/>
<rect x="696" y="287" width="1" height="1" fill="#a59c80" fill-opacity="0.8"/>
<rect x="716" y="287" width="1" height="1" fill="#a59c80" fill-opacity="0.8"/>
<rect x="736" y="287" width="1" height="1" fill="#a59c80" fill-opacity="0.8"/>
<rect x="756" y="287" width="1" height="1" fill="#a59c80" fill-opacity="0.8"/>
<rect x="776" y="287" width="1" height="1" fill="#a59c80" fill-opacity="0.8"/>
<rect x="796" y="287" width="1" height="1" fill="#a59c80" fill-opacity="0.8"/>
<rect x="816" y="287" width="1" height="1" fill="#a59c80" fill-opacity="0.8"/>
<rect x="836" y="287" width="1" height="1" fill="#a59c80" fill-opacity="0.8"/>
<rect x="856" y="287" width="1" height="1" fill="#a59c80" fill-opacity="0.8"/>
<rect x="876" y="287" width="1" height="1" fill="#a59c80" fill-opacity="0.8"/>
<rect x="896" y="287" width="1" height="1" fill="#a59c80" fill-opacity="0.8"/>
<rect x="916" y="287" width="1" height="1" fill="#a59c80" fill-opacity="0.8"/>
<rect x="936" y="287" width="1" height="1" fill="#a59c80" fill-opacity="0.8"/>
<rect x="956" y="287" width="1" height="1" fill="#a59c80" fill-opacity="0.8"/>
<rect x="976" y="287" width="1" height="1" fill="#a59c80" fill-opacity="0.8"/>
<rect x="996" y="287" width="1" height="1" fill="#a59c80" fill-opacity="0.8"/>
<rect x="36" y="413" width="1" height="1" fill="#a59c80" fill-opacity="0.8"/>
<rect x="56" y="413" width="1" height="1" fill="#a59c80" fill-opacity="0.8"/>
<rect x="76" y="413" width="1" height="1" fill="#a59c80" fill-opacity="0.8"/>
<rect x="96" y="413" width="1" height="1" fill="#a59c80" fill-opacity="0.8"/>
<rect x="116" y="413" width="1" height="1" fill="#a59c80" fill-opacity="0.8"/>
<rect x="136" y="413" width="1" height="1" fill="#a59c80" fill-opacity="0.8"/>
<rect x="156" y="413" width="1" height="1" fill="#a59c80" fill-opacity="0.8"/>
<rect x="176" y="413" width="1" height="1" fill="#a59c80" fill-opacity="0.8"/>
<rect x="196" y="413" width="1" height="1" fill="#a59c80" fill-opacity="0.8"/>
<rect x="216" y="413" width="1" height="1" fill="#a59c80" fill-opacity="0.8"/>
<rect x="236" y="413" width="1" height="1" fill="#a59c80" fill-opacity="0.8"/>
<rect x="256" y="413" width="1" height="1" fill="#a59c80" fill-opacity="0.8"/>
<rect x="276" y="413" width="1" height="1" fill="#a59c80" fill-opacity="0.8"/>
<rect x="296" y="413" width="1" height="1" fill="#a59c80" fill-opacity="0.8"/>
<rect x="316" y="413" width="1" height="1" fill="#a59c80" fill-opacity="0.8"/>
<rect x="336" y="413" width="1" height="1" fill="#a59c80" fill-opacity="0.8"/>
<rect x="356" y="413" width="1" height="1" fill="#a59c80" fill-opacity="0.8"/>
<rect x="376" y="413" width="1" height="1" fill="#a59c80" fill-opacity="0.8"/>
<rect x="396" y="413" width="1" height="1" fill="#a59c80" fill-opacity="0.8"/>
<rect x="416" y="413" width="1" height="1" fill="#a59c80" fill-opacity="0.8"/>
<rect x="436" y="413" width="1" height="1" fill="#a59c80" fill-opacity="0.8"/>
<rect x="456" y="413" width="1" height="1" fill="#a59c80" fill-opacity="0.8"/>
<rect x="476" y="413" width="1" height="1" fill="#a59c80" fill-opacity="0.8"/>
<rect x="496" y="413" width="1" height="1" fill="#a59c80" fill-opacity="0.8"/>
<rect x="516" y="413" width="1" height="1" fill="#a59c80" fill-opacity="0.8"/>
<rect x="536" y="413" width="1" height="1" fill="#a59c80" fill-opacity="0.8"/>
<rect x="556" y="413" width="1" height="1" fill="#a59c80" fill-opacity="0.8"/>
<rect x="576" y="413" width="1" height="1" fill="#a59c80" fill-opacity="0.8"/>
<rect x="596" y="413" width="1" height="1" fill="#a59c80" fill-opacity="0.8"/>
<rect x="616" y="413" width="1" height="1" fill="#a59c80" fill-opacity="0.8"/>
<rect x="636" y="413" width="1" height="1" fill="#a59c80" fill-opacity="0.8"/>
<rect x="656" y="413" width="1" height="1" fill="#a59c80" fill-opacity="0.8"/>
<rect x="676" y="413" width="1" height="1" fill="#a59c80" fill-opacity="0.8"/>
<rect x="696" y="413" width="1" height="1" fill="#a59c80" fill-opacity="0.8"/>
<rect x="716" y="413" width="1" height="1" fill="#a59c80" fill-opacity="0.8"/>
<rect x="736" y="413" width="1" height="1" fill="#a59c80" fill-opacity="0.8"/>
<rect x="756" y="413" width="1" height="1" fill="#a59c80" fill-opacity="0.8"/>
<rect x="776" y="413" width="1" height="1" fill="#a59c80" fill-opacity="0.8"/>
<rect x="796" y="413" width="1" height="1" fill="#a59c80" fill-opacity="0.8"/>
<rect x="816" y="413" width="1" height="1" fill="#a59c80" fill-opacity="0.8"/>
<rect x="836" y="413" width="1" height="1" fill="#a59c80" fill-opacity="0.8"/>
<rect x="856" y="413" width="1" height="1" fill="#a59c80" fill-opacity="0.8"/>
<rect x="876" y="413" width="1" height="1" fill="#a59c80" fill-opacity="0.8"/>
<rect x="896" y="413" width="1" height="1" fill="#a59c80" fill-opacity="0.8"/>
<rect x="916" y="413" width="1" height="1" fill="#a59c80" fill-opacity="0.8"/>
<rect x="936" y="413" width="1" height="1" fill="#a59c80" fill-opacity="0.8"/>
<rect x="956" y="413" width="1" height="1" fill="#a59c80" fill-opacity="0.8"/>
<rect x="976" y="413" width="1" height="1" fill="#a59c80" fill-opacity="0.8"/>
<rect x="996" y="413" width="1" height="1" fill="#a59c80" fill-opacity="0.8"/>
<rect x="36" y="476" width="1" height="1" fill="#a59c80" fill-opacity="0.8"/>
<rect x="56" y="476" width="1" height="1" fill="#a59c80" fill-opacity="0.8"/>
<rect x="76" y="476" width="1" height="1" fill="#a59c80" fill-opacity="0.8"/>
<rect x="96" y="476" width="1" height="1" fill="#a59c80" fill-opacity="0.8"/>
<rect x="116" y="476" width="1" height="1" fill="#a59c80" fill-opacity="0.8"/>
<rect x="136" y="476" width="1" height="1" fill="#a59c80" fill-opacity="0.8"/>
<rect x="156" y="476" width="1" height="1" fill="#a59c80" fill-opacity="0.8"/>
<rect x="176" y="476" width="1" height="1" fill="#a59c80" fill-opacity="0.8"/>
<rect x="196" y="476" width="1" height="1" fill="#a59c80" fill-opacity="0.8"/>
<rect x="216" y="476" width="1" height="1" fill="#a59c80" fill-opacity="0.8"/>
<rect x="236" y="476" width="1" height="1" fill="#a59c80" fill-opacity="0.8"/>
<rect x="256" y="476" width="1" height="1" fill="#a59c80" fill-opacity="0.8"/>
<rect x="276" y="476" width="1" height="1" fill="#a59c80" fill-opacity="0.8"/>
<rect x="296" y="476" width="1" height="1" fill="#a59c80" fill-opacity="0.8"/>
<rect x="316" y="476" width="1" height="1" fill="#a59c80" fill-opacity="0.8"/>
<rect x="336" y="476" width="1" height="1" fill="#a59c80" fill-opacity="0.8"/>
<rect x="356" y="476" width="1" height="1" fill="#a59c80" fill-opacity="0.8"/>
<rect x="376" y="476" width="1" height="1" fill="#a59c80" fill-opacity="0.8"/>
<rect x="396" y="476" width="1" height="1" fill="#a59c80" fill-opacity="0.8"/>
<rect x="416" y="476" width="1" height="1" fill="#a59c80" fill-opacity="0.8"/>
<rect x="436" y="476" width="1" height="1" fill="#a59c80" fill-opacity="0.8"/>
<rect x="456" y="476" width="1" height="1" fill="#a59c80" fill-opacity="0.8"/>
<rect x="476" y="476" width="1" height="1" fill="#a59c80" fill-opacity="0.8"/>
<rect x="496" y="476" width="1" height="1" fill="#a59c80" fill-opacity="0.8"/>
<rect x="516" y="476" width="1" height="1" fill="#a59c80" fill-opacity="0.8"/>
<rect x="536" y="476" width="1" height="1" fill="#a59c80" fill-opacity="0.8"/>
<rect x="556" y="476" width="1" height="1" fill="#a59c80" fill-opacity="0.8"/>
<rect x="576" y="476" width="1" height="1" fill="#a59c80" fill-opacity="0.8"/>
<rect x="596" y="476" width="1" height="1" fill="#a59c80" fill-opacity="0.8"/>
<rect x="616" y="476" width="1" height="1" fill="#a59c80" fill-opacity="0.8"/>
<rect x="636" y="476" width="1" height="1" fill="#a59c80" fill-opacity="0.8"/>
<rect x="656" y="476" width="1" height="1" fill="#a59c80" fill-opacity="0.8"/>
<rect x="676" y="476" width="1" height="1" fill="#a59c80" fill-opacity="0.8"/>
<rect x="696" y="476" width="1" height="1" fill="#a59c80" fill-opacity="0.8"/>
<rect x="716" y="476" width="1" height="1" fill="#a59c80" fill-opacity="0.8"/>
<rect x="736" y="476" width="1" height="1" fill="#a59c80" fill-opacity="0.8"/>
<rect x="756" y="476" width="1" height="1" fill="#a59c80" fill-opacity="0.8"/>
<rect x="776" y="476" width="1" height="1" fill="#a59c80" fill-opacity="0.8"/>
<rect x="796" y="476" width="1" height="1" fill="#a59c80" fill-opacity="0.8"/>
<rect x="816" y="476" width="1" height="1" fill="#a59c80" fill-opacity="0.8"/>
<rect x="836" y="476" width="1" height="1" fill="#a59c80" fill-opacity="0.8"/>
<rect x="856" y="476" width="1" height="1" fill="#a59c80" fill-opacity="0.8"/>
<rect x="876" y="476" width="1" height="1" fill="#a59c80" fill-opacity="0.8"/>
<rect x="896" y="476" width="1" height="1" fill="#a59c80" fill-opacity="0.8"/>
<rect x="916" y="476" width="1" height="1" fill="#a59c80" fill-opacity="0.8"/>
<rect x="936" y="476" width="1" height="1" fill="#a59c80" fill-opacity="0.8"/>
<rect x="956" y="476" width="1" height="1" fill="#a59c80" fill-opacity="0.8"/>
<rect x="976" y="476" width="1" height="1" fill="#a59c80" fill-opacity="0.8"/>
<rect x="996" y="476" width="1" height="1" fill="#a59c80" fill-opacity="0.8"/>
<rect x="36" y="539" width="1" height="1" fill="#a59c80" fill-opacity="0.8"/>
<rect x="56" y="539" width="1" height="1" fill="#a59c80" fill-opacity="0.8"/>
<rect x="76" y="539" width="1" height="1" fill="#a59c80" fill-opacity="0.8"/>
<rect x="96" y="539" width="1" height="1" fill="#a59c80" fill-opacity="0.8"/>
<rect x="116" y="539" width="1" height="1" fill="#a59c80" fill-opacity="0.8"/>
<rect x="136" y="539" width="1" height="1" fill="#a59c80" fill-opacity="0.8"/>
<rect x="156" y="539" width="1" height="1" fill="#a59c80" fill-opacity="0.8"/>
<rect x="176" y="539" width="1" height="1" fill="#a59c80" fill-opacity="0.8"/>
<rect x="196" y="539" width="1" height="1" fill="#a59c80" fill-opacity="0.8"/>
<rect x="216" y="539" width="1" height="1" fill="#a59c80" fill-opacity="0.8"/>
<rect x="236" y="539" width="1" height="1" fill="#a59c80" fill-opacity="0.8"/>
<rect x="256" y="539" width="1" height="1" fill="#a59c80" fill-opacity="0.8"/>
<rect x="276" y="539" width="1" height="1" fill="#a59c80" fill-opacity="0.8"/>
<rect x="296" y="539" width="1" height="1" fill="#a59c80" fill-opacity="0.8"/>
<rect x="316" y="539" width="1" height="1" fill="#a59c80" fill-opacity="0.8"/>
<rect x="336" y="539" width="1" height="1" fill="#a59c80" fill-opacity="0.8"/>
<rect x="356" y="539" width="1" height="1" fill="#a59c80" fill-opacity="0.8"/>
<rect x="376" y="539" width="1" height="1" fill="#a59c80" fill-opacity="0.8"/>
<rect x="396" y="539" width="1" height="1" fill="#a59c80" fill-opacity="0.8"/>
<rect x="416" y="539" width="1" height="1" fill="#a59c80" fill-opacity="0.8"/>
<rect x="436" y="539" width="1" height="1" fill="#a59c80" fill-opacity="0.8"/>
<rect x="456" y="539" width="1" height="1" fill="#a59c80" fill-opacity="0.8"/>
<rect x="476" y="539" width="1" height="1" fill="#a59c80" fill-opacity="0.8"/>
<rect x="496" y="539" width="1" height="1" fill="#a59c80" fill-opacity="0.8"/>
<rect x="516" y="539" width="1" height="1" fill="#a59c80" fill-opacity="0.8"/>
<rect x="536" y="539" width="1" height="1" fill="#a59c80" fill-opacity="0.8"/>
<rect x="556" y="539" width="1" height="1" fill="#a59c80" fill-opacity="0.8"/>
<rect x="576" y="539" width="1" height="1" fill="#a59c80" fill-opacity="0.8"/>
<rect x="596" y="539" width="1" height="1" fill="#a59c80" fill-opacity="0.8"/>
<rect x="616" y="539" width="1" height="1" fill="#a59c80" fill-opacity="0.8"/>
<rect x="636" y="539" width="1" height="1" fill="#a59c80" fill-opacity="0.8"/>
<rect x="656" y="539" width="1" height="1" fill="#a59c80" fill-opacity="0.8"/>
<rect x="676" y="539" width="1" height="1" fill="#a59c80" fill-opacity="0.8"/>
<rect x="696" y="539" width="1" height="1" fill="#a59c80" fill-opacity="0.8"/>
<rect x="716" y="539" width="1" height="1" fill="#a59c80" fill-opacity="0.8"/>
<rect x="736" y="539" width="1" height="1" fill="#a59c80" fill-opacity="0.8"/>
<rect x="756" y="539" width="1" height="1" fill="#a59c80" fill-opacity="0.8"/>
<rect x="776" y="539" width="1" height="1" fill="#a59c80" fill-opacity="0.8"/>
<rect x="796" y="539" width="1" height="1" fill="#a59c80" fill-opacity="0.8"/>
<rect x="816" y="539" width="1" height="1" fill="#a59c80" fill-opacity="0.8"/>
<rect x="836" y="539" width="1" height="1" fill="#a59c80" fill-opacity="0.8"/>
<rect x="856" y="539" width="1" height="1" fill="#a59c80" fill-opacity="0.8"/>
<rect x="876" y="539" width="1" height="1" fill="#a59c80" fill-opacity="0.8"/>
<rect x="896" y="539" width="1" height="1" fill="#a59c80" fill-opacity="0.8"/>
<rect x="916" y="539" width="1" height="1" fill="#a59c80" fill-opacity="0.8"/>
<rect x="936" y="539" width="1" height="1" fill="#a59c80" fill-opacity="0.8"/>
<rect x="956" y="539" width="1" height="1" fill="#a59c80" fill-opacity="0.8"/>
<rect x="976" y="539" width="1" height="1" fill="#a59c80" fill-opacity="0.8"/>
<rect x="996" y="539" width="1" height="1" fill="#a59c80" fill-opacity="0.8"/>
<rect x="36" y="602" width="1" height="1" fill="#a59c80" fill-opacity="0.8"/>
<rect x="56" y="602" width="1" height="1" fill="#a59c80" fill-opacity="0.8"/>
<rect x="76" y="602" width="1" height="1" fill="#a59c80" fill-opacity="0.8"/>
<rect x="96" y="602" width="1" height="1" fill="#a59c80" fill-opacity="0.8"/>
<rect x="116" y="602" width="1" height="1" fill="#a59c80" fill-opacity="0.8"/>
<rect x="136" y="602" width="1" height="1" fill="#a59c80" fill-opacity="0.8"/>
<rect x="156" y="602" width="1" height="1" fill="#a59c80" fill-opacity="0.8"/>
<rect x="176" y="602" width="1" height="1" fill="#a59c80" fill-opacity="0.8"/>
<rect x="196" y="602" width="1" height="1" fill="#a59c80" fill-opacity="0.8"/>
<rect x="216" y="602" width="1" height="1" fill="#a59c80" fill-opacity="0.8"/>
<rect x="236" y="602" width="1" height="1" fill="#a59c80" fill-opacity="0.8"/>
<rect x="256" y="602" width="1" height="1" fill="#a59c80" fill-opacity="0.8"/>
<rect x="276" y="602" width="1" height="1" fill="#a59c80" fill-opacity="0.8"/>
<rect x="296" y="602" width="1" height="1" fill="#a59c80" fill-opacity="0.8"/>
<rect x="316" y="602" width="1" height="1" fill="#a59c80" fill-opacity="0.8"/>
<rect x="336" y="602" width="1" height="1" fill="#a59c80" fill-opacity="0.8"/>
<rect x="356" y="602" width="1" height="1" fill="#a59c80" fill-opacity="0.8"/>
<rect x="376" y="602" width="1" height="1" fill="#a59c80" fill-opacity="0.8"/>
<rect x="396" y="602" width="1" height="1" fill="#a59c80" fill-opacity="0.8"/>
<rect x="416" y="602" width="1" height="1" fill="#a59c80" fill-opacity="0.8"/>
<rect x="436" y="602" width="1" height="1" fill="#a59c80" fill-opacity="0.8"/>
<rect x="456" y="602" width="1" height="1" fill="#a59c80" fill-opacity="0.8"/>
<rect x="476" y="602" width="1" height="1" fill="#a59c80" fill-opacity="0.8"/>
<rect x="496" y="602" width="1" height="1" fill="#a59c80" fill-opacity="0.8"/>
<rect x="516" y="602" width="1" height="1" fill="#a59c80" fill-opacity="0.8"/>
<rect x="536" y="602" width="1" height="1" fill="#a59c80" fill-opacity="0.8"/>
<rect x="556" y="602" width="1" height="1" fill="#a59c80" fill-opacity="0.8"/>
<rect x="576" y="602" width="1" height="1" fill="#a59c80" fill-opacity="0.8"/>
<rect x="596" y="602" width="1" height="1" fill="#a59c80" fill-opacity="0.8"/>
<rect x="616" y="602" width="1" height="1" fill="#a59c80" fill-opacity="0.8"/>
<rect x="636" y="602" width="1" height="1" fill="#a59c80" fill-opacity="0.8"/>
<rect x="656" y="602" width="1" height="1" fill="#a59c80" fill-opacity="0.8"/>
<rect x="676" y="602" width="1" height="1" fill="#a59c80" fill-opacity="0.8"/>
<rect x="696" y="602" width="1" height="1" fill="#a59c80" fill-opacity="0.8"/>
<rect x="716" y="602" width="1" height="1" fill="#a59c80" fill-opacity="0.8"/>
<rect x="736" y="602" width="1" height="1" fill="#a59c80" fill-opacity="0.8"/>
<rect x="756" y="602" width="1" height="1" fill="#a59c80" fill-opacity="0.8"/>
<rect x="776" y="602" width="1" height="1" fill="#a59c80" fill-opacity="0.8"/>
<rect x="796" y="602" width="1" height="1" fill="#a59c80" fill-opacity="0.8"/>
<rect x="816" y="602" width="1" height="1" fill="#a59c80" fill-opacity="0.8"/>
<rect x="836" y="602" width="1" height="1" fill="#a59c80" fill-opacity="0.8"/>
<rect x="856" y="602" width="1" height="1" fill="#a59c80" fill-opacity="0.8"/>
<rect x="876" y="602" width="1" height="1" fill="#a59c80" fill-opacity="0.8"/>
<rect x="896" y="602" width="1" height="1" fill="#a59c80" fill-opacity="0.8"/>
<rect x="916" y="602" width="1" height="1" fill="#a59c80" fill-opacity="0.8"/>
<rect x="936" y="602" width="1" height="1" fill="#a59c80" fill-opacity="0.8"/>
<rect x="956" y="602" width="1" height="1" fill="#a59c80" fill-opacity="0.8"/>
<rect x="976" y="602" width="1" height="1" fill="#a59c80" fill-opacity="0.8"/>
<rect x="996" y="602" width="1" height="1" fill="#a59c80" fill-opacity="0.8"/>
<rect x="17" y="298" width="999" height="1" fill="#064006"/>
<rect x="17" y="297" width="999" height="1" fill="#042804"/>
<rect x="17" y="297" width="1" height="1" fill="#00d000"/>
<rect x="18" y="297" width="1" height="1" fill="#00d000"/>
<rect x="19" y="297" width="1" height="1" fill="#00d000"/>
<rect x="22" y="297" width="1" height="1" fill="#00d000"/>
<rect x="23" y="297" width="1" height="1" fill="#00d000"/>
<rect x="24" y="297" width="1" height="1" fill="#00d000"/>
<rect x="27" y="297" width="1" height="1" fill="#00d000"/>
<rect x="28" y="297" width="1" height="1" fill="#00d000"/>
<rect x="29" y="297" width="1" height="1" fill="#00d000"/>
<rect x="32" y="297" width="1" height="1" fill="#00d000"/>
<rect x="33" y="297" width="1" height="1" fill="#00d000"/>
<rect x="34" y="297" width="1" height="1" fill="#00d000"/>
<rect x="37" y="297" width="1" height="1" fill="#00d000"/>
<rect x="38" y="297" width="1" height="1" fill="#00d000"/>
<rect x="39" y="297" width="1" height="1" fill="#00d000"/>
<rect x="42" y="297" width="1" height="1" fill="#00d000"/>
<rect x="43" y="297" width="1" height="1" fill="#00d000"/>
<rect x="44" y="297" width="1" height="1" fill="#00d000"/>
<rect x="47" y="297" width="1" height="1" fill="#00d000"/>
<rect x="48" y="297" width="1" height="1" fill="#00d000"/>
<rect x="49" y="297" width="1" height="1" fill="#00d000"/>
<rect x="52" y="297" width="1" height="1" fill="#00d000"/>
<rect x="53" y="297" width="1" height="1" fill="#00d000"/>
<rect x="54" y="297" width="1" height="1" fill="#00d000"/>
<rect x="57" y="297" width="1" height="1" fill="#00d000"/>
<rect x="58" y="297" width="1" height="1" fill="#00d000"/>
<rect x="59" y="297" width="1" height="1" fill="#00d000"/>
<rect x="62" y="297" width="1" height="1" fill="#00d000"/>
<rect x="63" y="297" width="1" height="1" fill="#00d000"/>
<rect x="64" y="297" width="1" height="1" fill="#00d000"/>
<rect x="67" y="297" width="1" height="1" fill="#00d000"/>
<rect x="68" y="297" width="1" height="1" fill="#00d000"/>
<rect x="69" y="297" width="1" height="1" fill="#00d000"/>
<rect x="72" y="297" width="1" height="1" fill="#00d000"/>
<rect x="73" y="297" width="1" height="1" fill="#00d000"/>
<rect x="74" y="297" width="1" height="1" fill="#00d000"/>
<rect x="77" y="297" width="1" height="1" fill="#00d000"/>
<rect x="78" y="297" width="1" height="1" fill="#00d000"/>
<rect x="79" y="297" width="1" height="1" fill="#00d000"/>
<rect x="82" y="297" width="1" height="1" fill="#00d000"/>
<rect x="83" y="297" width="1" height="1" fill="#00d000"/>
<rect x="84" y="297" width="1" height="1" fill="#00d000"/>
<rect x="87" y="297" width="1" height="1" fill="#00d000"/>
<rect x="88" y="297" width="1" height="1" fill="#00d000"/>
<rect x="89" y="297" width="1" height="1" fill="#00d000"/>
<rect x="92" y="297" width="1" height="1" fill="#00d000"/>
<rect x="93" y="297" width="1" height="1" fill="#00d000"/>
<rect x="94" y="297" width="1" height="1" fill="#00d000"/>
<rect x="97" y="297" width="1" height="1" fill="#00d000"/>
<rect x="98" y="297" width="1" height="1" fill="#00d000"/>
<rect x="99" y="297" width="1" height="1" fill="#00d000"/>
<rect x="102" y="297" width="1" height="1" fill="#00d000"/>
<rect x="103" y="297" width="1" height="1" fill="#00d000"/>
<rect x="104" y="297" width="1" height="1" fill="#00d000"/>
<rect x="107" y="297" width="1" height="1" fill="#00d000"/>
<rect x="108" y="297" width="1" height="1" fill="#00d000"/>
<rect x="109" y="297" width="1" height="1" fill="#00d000"/>
<rect x="112" y="297" width="1" height="1" fill="#00d000"/>
<rect x="113" y="297" width="1" height="1" fill="#00d000"/>
<rect x="114" y="297" width="1" height="1" fill="#00d000"/>
<rect x="117" y="297" width="1" height="1" fill="#00d000"/>
<rect x="118" y="297" width="1" height="1" fill="#00d000"/>
<rect x="119" y="297" width="1" height="1" fill="#00d000"/>
<rect x="122" y="297" width="1" height="1" fill="#00d000"/>
<rect x="123" y="297" width="1" height="1" fill="#00d000"/>
<rect x="124" y="297" width="1" height="1" fill="#00d000"/>
<rect x="127" y="297" width="1" height="1" fill="#00d000"/>
<rect x="128" y="297" width="1" height="1" fill="#00d000"/>
<rect x="129" y="297" width="1" height="1" fill="#00d000"/>
<rect x="132" y="297" width="1" height="1" fill="#00d000"/>
<rect x="133" y="297" width="1" height="1" fill="#00d000"/>
<rect x="134" y="297" width="1" height="1" fill="#00d000"/>
<rect x="137" y="297" width="1" height="1" fill="#00d000"/>
<rect x="138" y="297" width="1" height="1" fill="#00d000"/>
<rect x="139" y="297" width="1" height="1" fill="#00d000"/>
<rect x="142" y="297" width="1" height="1" fill="#00d000"/>
<rect x="143" y="297" width="1" height="1" fill="#00d000"/>
<rect x="144" y="297" width="1" height="1" fill="#00d000"/>
<rect x="147" y="297" width="1" height="1" fill="#00d000"/>
<rect x="148" y="297" width="1" height="1" fill="#00d000"/>
<rect x="149" y="297" width="1" height="1" fill="#00d000"/>
<rect x="152" y="297" width="1" height="1" fill="#00d000"/>
<rect x="153" y="297" width="1" height="1" fill="#00d000"/>
<rect x="154" y="297" width="1" height="1" fill="#00d000"/>
<rect x="157" y="297" width="1" height="1" fill="#00d000"/>
<rect x="158" y="297" width="1" height="1" fill="#00d000"/>
<rect x="159" y="297" width="1" height="1" fill="#00d000"/>
<rect x="162" y="297" width="1" height="1" fill="#00d000"/>
<rect x="163" y="297" width="1" height="1" fill="#00d000"/>
<rect x="164" y="297" width="1" height="1" fill="#00d000"/>
<rect x="167" y="297" width="1" height="1" fill="#00d000"/>
<rect x="168" y="297" width="1" height="1" fill="#00d000"/>
<rect x="169" y="297" width="1" height="1" fill="#00d000"/>
<rect x="172" y="297" width="1" height="1" fill="#00d000"/>
<rect x="173" y="297" width="1" height="1" fill="#00d000"/>
<rect x="174" y="297" width="1" height="1" fill="#00d000"/>
<rect x="177" y="297" width="1" height="1" fill="#00d000"/>
<rect x="178" y="297" width="1" height="1" fill="#00d000"/>
<rect x="179" y="297" width="1" height="1" fill="#00d000"/>
<rect x="182" y="297" width="1" height="1" fill="#00d000"/>
<rect x="183" y="297" width="1" height="1" fill="#00d000"/>
<rect x="184" y="297" width="1" height="1" fill="#00d000"/>
<rect x="187" y="297" width="1" height="1" fill="#00d000"/>
<rect x="188" y="297" width="1" height="1" fill="#00d000"/>
<rect x="189" y="297" width="1" height="1" fill="#00d000"/>
<rect x="192" y="297" width="1" height="1" fill="#00d000"/>
<rect x="193" y="297" width="1" height="1" fill="#00d000"/>
<rect x="194" y="297" width="1" height="1" fill="#00d000"/>
<rect x="197" y="297" width="1" height="1" fill="#00d000"/>
<rect x="198" y="297" width="1" height="1" fill="#00d000"/>
<rect x="199" y="297" width="1" height="1" fill="#00d000"/>
<rect x="202" y="297" width="1" height="1" fill="#00d000"/>
<rect x="203" y="297" width="1" height="1" fill="#00d000"/>
<rect x="204" y="297" width="1" height="1" fill="#00d000"/>
<rect x="207" y="297" width="1" height="1" fill="#00d000"/>
<rect x="208" y="297" width="1" height="1" fill="#00d000"/>
<rect x="209" y="297" width="1" height="1" fill="#00d000"/>
<rect x="212" y="297" width="1" height="1" fill="#00d000"/>
<rect x="213" y="297" width="1" height="1" fill="#00d000"/>
<rect x="214" y="297" width="1" height="1" fill="#00d000"/>
<rect x="217" y="297" width="1" height="1" fill="#00d000"/>
<rect x="218" y="297" width="1" height="1" fill="#00d000"/>
<rect x="219" y="297" width="1" height="1" fill="#00d000"/>
<rect x="222" y="297" width="1" height="1" fill="#00d000"/>
<rect x="223" y="297" width="1" height="1" fill="#00d000"/>
<rect x="224" y="297" width="1" height="1" fill="#00d000"/>
<rect x="227" y="297" width="1" height="1" fill="#00d000"/>
<rect x="228" y="297" width="1" height="1" fill="#00d000"/>
<rect x="229" y="297" width="1" height="1" fill="#00d000"/>
<rect x="232" y="297" width="1" height="1" fill="#00d000"/>
<rect x="233" y="297" width="1" height="1" fill="#00d000"/>
<rect x="234" y="297" width="1" height="1" fill="#00d000"/>
<rect x="237" y="297" width="1" height="1" fill="#00d000"/>
<rect x="238" y="297" width="1" height="1" fill="#00d000"/>
<rect x="239" y="297" width="1" height="1" fill="#00d000"/>
<rect x="242" y="297" width="1" height="1" fill="#00d000"/>
<rect x="243" y="297" width="1" height="1" fill="#00d000"/>
<rect x="244" y="297" width="1" height="1" fill="#00d000"/>
<rect x="247" y="297" width="1" height="1" fill="#00d000"/>
<rect x="248" y="297" width="1" height="1" fill="#00d000"/>
<rect x="249" y="297" width="1" height="1" fill="#00d000"/>
<rect x="252" y="297" width="1" height="1" fill="#00d000"/>
<rect x="253" y="297" width="1" height="1" fill="#00d000"/>
<rect x="254" y="297" width="1" height="1" fill="#00d000"/>
<rect x="257" y="297" width="1" height="1" fill="#00d000"/>
<rect x="258" y="297" width="1" height="1" fill="#00d000"/>
<rect x="259" y="297" width="1" height="1" fill="#00d000"/>
<rect x="262" y="297" width="1" height="1" fill="#00d000"/>
<rect x="263" y="297" width="1" height="1" fill="#00d000"/>
<rect x="264" y="297" width="1" height="1" fill="#00d000"/>
<rect x="267" y="297" width="1" height="1" fill="#00d000"/>
<rect x="268" y="297" width="1" height="1" fill="#00d000"/>
<rect x="269" y="297" width="1" height="1" fill="#00d000"/>
<rect x="272" y="297" width="1" height="1" fill="#00d000"/>
<rect x="273" y="297" width="1" height="1" fill="#00d000"/>
<rect x="274" y="297" width="1" height="1" fill="#00d000"/>
<rect x="277" y="297" width="1" height="1" fill="#00d000"/>
<rect x="278" y="297" width="1" height="1" fill="#00d000"/>
<rect x="279" y="297" width="1" height="1" fill="#00d000"/>
<rect x="282" y="297" width="1" height="1" fill="#00d000"/>
<rect x="283" y="297" width="1" height="1" fill="#00d000"/>
<rect x="284" y="297" width="1" height="1" fill="#00d000"/>
<rect x="287" y="297" width="1" height="1" fill="#00d000"/>
<rect x="288" y="297" width="1" height="1" fill="#00d000"/>
<rect x="289" y="297" width="1" height="1" fill="#00d000"/>
<rect x="292" y="297" width="1" height="1" fill="#00d000"/>
<rect x="293" y="297" width="1" height="1" fill="#00d000"/>
<rect x="294" y="297" width="1" height="1" fill="#00d000"/>
<rect x="297" y="297" width="1" height="1" fill="#00d000"/>
<rect x="298" y="297" width="1" height="1" fill="#00d000"/>
<rect x="299" y="297" width="1" height="1" fill="#00d000"/>
<rect x="302" y="297" width="1" height="1" fill="#00d000"/>
<rect x="303" y="297" width="1" height="1" fill="#00d000"/>
<rect x="304" y="297" width="1" height="1" fill="#00d000"/>
<rect x="307" y="297" width="1" height="1" fill="#00d000"/>
<rect x="308" y="297" width="1" height="1" fill="#00d000"/>
<rect x="309" y="297" width="1" height="1" fill="#00d000"/>
<rect x="312" y="297" width="1" height="1" fill="#00d000"/>
<rect x="313" y="297" width="1" height="1" fill="#00d000"/>
<rect x="314" y="297" width="1" height="1" fill="#00d000"/>
<rect x="317" y="297" width="1" height="1" fill="#00d000"/>
<rect x="318" y="297" width="1" height="1" fill="#00d000"/>
<rect x="319" y="297" width="1" height="1" fill="#00d000"/>
<rect x="322" y="297" width="1" height="1" fill="#00d000"/>
<rect x="323" y="297" width="1" height="1" fill="#00d000"/>
<rect x="324" y="297" width="1" height="1" fill="#00d000"/>
<rect x="327" y="297" width="1" height="1" fill="#00d000"/>
<rect x="328" y="297" width="1" height="1" fill="#00d000"/>
<rect x="329" y="297" width="1" height="1" fill="#00d000"/>
<rect x="332" y="297" width="1" height="1" fill="#00d000"/>
<rect x="333" y="297" width="1" height="1" fill="#00d000"/>
<rect x="334" y="297" width="1" height="1" fill="#00d000"/>
<rect x="337" y="297" width="1" height="1" fill="#00d000"/>
<rect x="338" y="297" width="1" height="1" fill="#00d000"/>
<rect x="339" y="297" width="1" height="1" fill="#00d000"/>
<rect x="342" y="297" width="1" height="1" fill="#00d000"/>
<rect x="343" y="297" width="1" height="1" fill="#00d000"/>
<rect x="344" y="297" width="1" height="1" fill="#00d000"/>
<rect x="347" y="297" width="1" height="1" fill="#00d000"/>
<rect x="348" y="297" width="1" height="1" fill="#00d000"/>
<rect x="349" y="297" width="1" height="1" fill="#00d000"/>
<rect x="352" y="297" width="1" height="1" fill="#00d000"/>
<rect x="353" y="297" width="1" height="1" fill="#00d000"/>
<rect x="354" y="297" width="1" height="1" fill="#00d000"/>
<rect x="357" y="297" width="1" height="1" fill="#00d000"/>
<rect x="358" y="297" width="1" height="1" fill="#00d000"/>
<rect x="359" y="297" width="1" height="1" fill="#00d000"/>
<rect x="362" y="297" width="1" height="1" fill="#00d000"/>
<rect x="363" y="297" width="1" height="1" fill="#00d000"/>
<rect x="364" y="297" width="1" height="1" fill="#00d000"/>
<rect x="367" y="297" width="1" height="1" fill="#00d000"/>
<rect x="368" y="297" width="1" height="1" fill="#00d000"/>
<rect x="369" y="297" width="1" height="1" fill="#00d000"/>
<rect x="372" y="297" width="1" height="1" fill="#00d000"/>
<rect x="373" y="297" width="1" height="1" fill="#00d000"/>
<rect x="374" y="297" width="1" height="1" fill="#00d000"/>
<rect x="377" y="297" width="1" height="1" fill="#00d000"/>
<rect x="378" y="297" width="1" height="1" fill="#00d000"/>
<rect x="379" y="297" width="1" height="1" fill="#00d000"/>
<rect x="382" y="297" width="1" height="1" fill="#00d000"/>
<rect x="383" y="297" width="1" height="1" fill="#00d000"/>
<rect x="384" y="297" width="1" height="1" fill="#00d000"/>
<rect x="387" y="297" width="1" height="1" fill="#00d000"/>
<rect x="388" y="297" width="1" height="1" fill="#00d000"/>
<rect x="389" y="297" width="1" height="1" fill="#00d000"/>
<rect x="392" y="297" width="1" height="1" fill="#00d000"/>
<rect x="393" y="297" width="1" height="1" fill="#00d000"/>
<rect x="394" y="297" width="1" height="1" fill="#00d000"/>
<rect x="397" y="297" width="1" height="1" fill="#00d000"/>
<rect x="398" y="297" width="1" height="1" fill="#00d000"/>
<rect x="399" y="297" width="1" height="1" fill="#00d000"/>
<rect x="402" y="297" width="1" height="1" fill="#00d000"/>
<rect x="403" y="297" width="1" height="1" fill="#00d000"/>
<rect x="404" y="297" width="1" height="1" fill="#00d000"/>
<rect x="407" y="297" width="1" height="1" fill="#00d000"/>
<rect x="408" y="297" width="1" height="1" fill="#00d000"/>
<rect x="409" y="297" width="1" height="1" fill="#00d000"/>
<rect x="412" y="297" width="1" height="1" fill="#00d000"/>
<rect x="413" y="297" width="1" height="1" fill="#00d000"/>
<rect x="414" y="297" width="1" height="1" fill="#00d000"/>
<rect x="417" y="297" width="1" height="1" fill="#00d000"/>
<rect x="418" y="297" width="1" height="1" fill="#00d000"/>
<rect x="419" y="297" width="1" height="1" fill="#00d000"/>
<rect x="422" y="297" width="1" height="1" fill="#00d000"/>
<rect x="423" y="297" width="1" height="1" fill="#00d000"/>
<rect x="424" y="297" width="1" height="1" fill="#00d000"/>
<rect x="427" y="297" width="1" height="1" fill="#00d000"/>
<rect x="428" y="297" width="1" height="1" fill="#00d000"/>
<rect x="429" y="297" width="1" height="1" fill="#00d000"/>
<rect x="432" y="297" width="1" height="1" fill="#00d000"/>
<rect x="433" y="297" width="1" height="1" fill="#00d000"/>
<rect x="434" y="297" width="1" height="1" fill="#00d000"/>
<rect x="437" y="297" width="1" height="1" fill="#00d000"/>
<rect x="438" y="297" width="1" height="1" fill="#00d000"/>
<rect x="439" y="297" width="1" height="1" fill="#00d000"/>
<rect x="442" y="297" width="1" height="1" fill="#00d000"/>
<rect x="443" y="297" width="1" height="1" fill="#00d000"/>
<rect x="444" y="297" width="1" height="1" fill="#00d000"/>
<rect x="447" y="297" width="1" height="1" fill="#00d000"/>
<rect x="448" y="297" width="1" height="1" fill="#00d000"/>
<rect x="449" y="297" width="1" height="1" fill="#00d000"/>
<rect x="452" y="297" width="1" height="1" fill="#00d000"/>
<rect x="453" y="297" width="1" height="1" fill="#00d000"/>
<rect x="454" y="297" width="1" height="1" fill="#00d000"/>
<rect x="457" y="297" width="1" height="1" fill="#00d000"/>
<rect x="458" y="297" width="1" height="1" fill="#00d000"/>
<rect x="459" y="297" width="1" height="1" fill="#00d000"/>
<rect x="462" y="297" width="1" height="1" fill="#00d000"/>
<rect x="463" y="297" width="1" height="1" fill="#00d000"/>
<rect x="464" y="297" width="1" height="1" fill="#00d000"/>
<rect x="467" y="297" width="1" height="1" fill="#00d000"/>
<rect x="468" y="297" width="1" height="1" fill="#00d000"/>
<rect x="469" y="297" width="1" height="1" fill="#00d000"/>
<rect x="472" y="297" width="1" height="1" fill="#00d000"/>
<rect x="473" y="297" width="1" height="1" fill="#00d000"/>
<rect x="474" y="297" width="1" height="1" fill="#00d000"/>
<rect x="477" y="297" width="1" height="1" fill="#00d000"/>
<rect x="478" y="297" width="1" height="1" fill="#00d000"/>
<rect x="479" y="297" width="1" height="1" fill="#00d000"/>
<rect x="482" y="297" width="1" height="1" fill="#00d000"/>
<rect x="483" y="297" width="1" height="1" fill="#00d000"/>
<rect x="484" y="297" width="1" height="1" fill="#00d000"/>
<rect x="487" y="297" width="1" height="1" fill="#00d000"/>
<rect x="488" y="297" width="1" height="1" fill="#00d000"/>
<rect x="489" y="297" width="1" height="1" fill="#00d000"/>
<rect x="492" y="297" width="1" height="1" fill="#00d000"/>
<rect x="493" y="297" width="1" height="1" fill="#00d000"/>
<rect x="494" y="297" width="1" height="1" fill="#00d000"/>
<rect x="497" y="297" width="1" height="1" fill="#00d000"/>
<rect x="498" y="297" width="1" height="1" fill="#00d000"/>
<rect x="499" y="297" width="1" height="1" fill="#00d000"/>
<rect x="502" y="297" width="1" height="1" fill="#00d000"/>
<rect x="503" y="297" width="1" height="1" fill="#00d000"/>
<rect x="504" y="297" width="1" height="1" fill="#00d000"/>
<rect x="507" y="297" width="1" height="1" fill="#00d000"/>
<rect x="508" y="297" width="1" height="1" fill="#00d000"/>
<rect x="509" y="297" width="1" height="1" fill="#00d000"/>
<rect x="512" y="297" width="1" height="1" fill="#00d000"/>
<rect x="513" y="297" width="1" height="1" fill="#00d000"/>
<rect x="514" y="297" width="1" height="1" fill="#00d000"/>
<rect x="517" y="297" width="1" height="1" fill="#00d000"/>
<rect x="518" y="297" width="1" height="1" fill="#00d000"/>
<rect x="519" y="297" width="1" height="1" fill="#00d000"/>
<rect x="522" y="297" width="1" height="1" fill="#00d000"/>
<rect x="523" y="297" width="1" height="1" fill="#00d000"/>
<rect x="524" y="297" width="1" height="1" fill="#00d000"/>
<rect x="527" y="297" width="1" height="1" fill="#00d000"/>
<rect x="528" y="297" width="1" height="1" fill="#00d000"/>
<rect x="529" y="297" width="1" height="1" fill="#00d000"/>
<rect x="532" y="297" width="1" height="1" fill="#00d000"/>
<rect x="533" y="297" width="1" height="1" fill="#00d000"/>
<rect x="534" y="297" width="1" height="1" fill="#00d000"/>
<rect x="537" y="297" width="1" height="1" fill="#00d000"/>
<rect x="538" y="297" width="1" height="1" fill="#00d000"/>
<rect x="539" y="297" width="1" height="1" fill="#00d000"/>
<rect x="542" y="297" width="1" height="1" fill="#00d000"/>
<rect x="543" y="297" width="1" height="1" fill="#00d000"/>
<rect x="544" y="297" width="1" height="1" fill="#00d000"/>
<rect x="547" y="297" width="1" height="1" fill="#00d000"/>
<rect x="548" y="297" width="1" height="1" fill="#00d000"/>
<rect x="549" y="297" width="1" height="1" fill="#00d000"/>
<rect x="552" y="297" width="1" height="1" fill="#00d000"/>
<rect x="553" y="297" width="1" height="1" fill="#00d000"/>
<rect x="554" y="297" width="1" height="1" fill="#00d000"/>
<rect x="557" y="297" width="1" height="1" fill="#00d000"/>
<rect x="558" y="297" width="1" height="1" fill="#00d000"/>
<rect x="559" y="297" width="1" height="1" fill="#00d000"/>
<rect x="562" y="297" width="1" height="1" fill="#00d000"/>
<rect x="563" y="297" width="1" height="1" fill="#00d000"/>
<rect x="564" y="297" width="1" height="1" fill="#00d000"/>
<rect x="567" y="297" width="1" height="1" fill="#00d000"/>
<rect x="568" y="297" width="1" height="1" fill="#00d000"/>
<rect x="569" y="297" width="1" height="1" fill="#00d000"/>
<rect x="572" y="297" width="1" height="1" fill="#00d000"/>
<rect x="573" y="297" width="1" height="1" fill="#00d000"/>
<rect x="574" y="297" width="1" height="1" fill="#00d000"/>
<rect x="577" y="297" width="1" height="1" fill="#00d000"/>
<rect x="578" y="297" width="1" height="1" fill="#00d000"/>
<rect x="579" y="297" width="1" height="1" fill="#00d000"/>
<rect x="582" y="297" width="1" height="1" fill="#00d000"/>
<rect x="583" y="297" width="1" height="1" fill="#00d000"/>
<rect x="584" y="297" width="1" height="1" fill="#00d000"/>
<rect x="587" y="297" width="1" height="1" fill="#00d000"/>
<rect x="588" y="297" width="1" height="1" fill="#00d000"/>
<rect x="589" y="297" width="1" height="1" fill="#00d000"/>
<rect x="592" y="297" width="1" height="1" fill="#00d000"/>
<rect x="593" y="297" width="1" height="1" fill="#00d000"/>
<rect x="594" y="297" width="1" height="1" fill="#00d000"/>
<rect x="597" y="297" width="1" height="1" fill="#00d000"/>
<rect x="598" y="297" width="1" height="1" fill="#00d000"/>
<rect x="599" y="297" width="1" height="1" fill="#00d000"/>
<rect x="602" y="297" width="1" height="1" fill="#00d000"/>
<rect x="603" y="297" width="1" height="1" fill="#00d000"/>
<rect x="604" y="297" width="1" height="1" fill="#00d000"/>
<rect x="607" y="297" width="1" height="1" fill="#00d000"/>
<rect x="608" y="297" width="1" height="1" fill="#00d000"/>
<rect x="609" y="297" width="1" height="1" fill="#00d000"/>
<rect x="612" y="297" width="1" height="1" fill="#00d000"/>
<rect x="613" y="297" width="1" height="1" fill="#00d000"/>
<rect x="614" y="297" width="1" height="1" fill="#00d000"/>
<rect x="617" y="297" width="1" height="1" fill="#00d000"/>
<rect x="618" y="297" width="1" height="1" fill="#00d000"/>
<rect x="619" y="297" width="1" height="1" fill="#00d000"/>
<rect x="622" y="297" width="1" height="1" fill="#00d000"/>
<rect x="623" y="297" width="1" height="1" fill="#00d000"/>
<rect x="624" y="297" width="1" height="1" fill="#00d000"/>
<rect x="627" y="297" width="1" height="1" fill="#00d000"/>
<rect x="628" y="297" width="1" height="1" fill="#00d000"/>
<rect x="629" y="297" width="1" height="1" fill="#00d000"/>
<rect x="632" y="297" width="1" height="1" fill="#00d000"/>
<rect x="633" y="297" width="1" height="1" fill="#00d000"/>
<rect x="634" y="297" width="1" height="1" fill="#00d000"/>
<rect x="637" y="297" width="1" height="1" fill="#00d000"/>
<rect x="638" y="297" width="1" height="1" fill="#00d000"/>
<rect x="639" y="297" width="1" height="1" fill="#00d000"/>
<rect x="642" y="297" width="1" height="1" fill="#00d000"/>
<rect x="643" y="297" width="1" height="1" fill="#00d000"/>
<rect x="644" y="297" width="1" height="1" fill="#00d000"/>
<rect x="647" y="297" width="1" height="1" fill="#00d000"/>
<rect x="648" y="297" width="1" height="1" fill="#00d000"/>
<rect x="649" y="297" width="1" height="1" fill="#00d000"/>
<rect x="652" y="297" width="1" height="1" fill="#00d000"/>
<rect x="653" y="297" width="1" height="1" fill="#00d000"/>
<rect x="654" y="297" width="1" height="1" fill="#00d000"/>
<rect x="657" y="297" width="1" height="1" fill="#00d000"/>
<rect x="658" y="297" width="1" height="1" fill="#00d000"/>
<rect x="659" y="297" width="1" height="1" fill="#00d000"/>
<rect x="662" y="297" width="1" height="1" fill="#00d000"/>
<rect x="663" y="297" width="1" height="1" fill="#00d000"/>
<rect x="664" y="297" width="1" height="1" fill="#00d000"/>
<rect x="667" y="297" width="1" height="1" fill="#00d000"/>
<rect x="668" y="297" width="1" height="1" fill="#00d000"/>
<rect x="669" y="297" width="1" height="1" fill="#00d000"/>
<rect x="672" y="297" width="1" height="1" fill="#00d000"/>
<rect x="673" y="297" width="1" height="1" fill="#00d000"/>
<rect x="674" y="297" width="1" height="1" fill="#00d000"/>
<rect x="677" y="297" width="1" height="1" fill="#00d000"/>
<rect x="678" y="297" width="1" height="1" fill="#00d000"/>
<rect x="679" y="297" width="1" height="1" fill="#00d000"/>
<rect x="682" y="297" width="1" height="1" fill="#00d000"/>
<rect x="683" y="297" width="1" height="1" fill="#00d000"/>
<rect x="684" y="297" width="1" height="1" fill="#00d000"/>
<rect x="687" y="297" width="1" height="1" fill="#00d000"/>
<rect x="688" y="297" width="1" height="1" fill="#00d000"/>
<rect x="689" y="297" width="1" height="1" fill="#00d000"/>
<rect x="692" y="297" width="1" height="1" fill="#00d000"/>
<rect x="693" y="297" width="1" height="1" fill="#00d000"/>
<rect x="694" y="297" width="1" height="1" fill="#00d000"/>
<rect x="697" y="297" width="1" height="1" fill="#00d000"/>
<rect x="698" y="297" width="1" height="1" fill="#00d000"/>
<rect x="699" y="297" width="1" height="1" fill="#00d000"/>
<rect x="702" y="297" width="1" height="1" fill="#00d000"/>
<rect x="703" y="297" width="1" height="1" fill="#00d000"/>
<rect x="704" y="297" width="1" height="1" fill="#00d000"/>
<rect x="707" y="297" width="1" height="1" fill="#00d000"/>
<rect x="708" y="297" width="1" height="1" fill="#00d000"/>
<rect x="709" y="297" width="1" height="1" fill="#00d000"/>
<rect x="712" y="297" width="1" height="1" fill="#00d000"/>
<rect x="713" y="297" width="1" height="1" fill="#00d000"/>
<rect x="714" y="297" width="1" height="1" fill="#00d000"/>
<rect x="717" y="297" width="1" height="1" fill="#00d000"/>
<rect x="718" y="297" width="1" height="1" fill="#00d000"/>
<rect x="719" y="297" width="1" height="1" fill="#00d000"/>
<rect x="722" y="297" width="1" height="1" fill="#00d000"/>
<rect x="723" y="297" width="1" height="1" fill="#00d000"/>
<rect x="724" y="297" width="1" height="1" fill="#00d000"/>
<rect x="727" y="297" width="1" height="1" fill="#00d000"/>
<rect x="728" y="297" width="1" height="1" fill="#00d000"/>
<rect x="729" y="297" width="1" height="1" fill="#00d000"/>
<rect x="732" y="297" width="1" height="1" fill="#00d000"/>
<rect x="733" y="297" width="1" height="1" fill="#00d000"/>
<rect x="734" y="297" width="1" height="1" fill="#00d000"/>
<rect x="737" y="297" width="1" height="1" fill="#00d000"/>
<rect x="738" y="297" width="1" height="1" fill="#00d000"/>
<rect x="739" y="297" width="1" height="1" fill="#00d000"/>
<rect x="742" y="297" width="1" height="1" fill="#00d000"/>
<rect x="743" y="297" width="1" height="1" fill="#00d000"/>
<rect x="744" y="297" width="1" height="1" fill="#00d000"/>
<rect x="747" y="297" width="1" height="1" fill="#00d000"/>
<rect x="748" y="297" width="1" height="1" fill="#00d000"/>
<rect x="749" y="297" width="1" height="1" fill="#00d000"/>
<rect x="752" y="297" width="1" height="1" fill="#00d000"/>
<rect x="753" y="297" width="1" height="1" fill="#00d000"/>
<rect x="754" y="297" width="1" height="1" fill="#00d000"/>
<rect x="757" y="297" width="1" height="1" fill="#00d000"/>
<rect x="758" y="297" width="1" height="1" fill="#00d000"/>
<rect x="759" y="297" width="1" height="1" fill="#00d000"/>
<rect x="762" y="297" width="1" height="1" fill="#00d000"/>
<rect x="763" y="297" width="1" height="1" fill="#00d000"/>
<rect x="764" y="297" width="1" height="1" fill="#00d000"/>
<rect x="767" y="297" width="1" height="1" fill="#00d000"/>
<rect x="768" y="297" width="1" height="1" fill="#00d000"/>
<rect x="769" y="297" width="1" height="1" fill="#00d000"/>
<rect x="772" y="297" width="1" height="1" fill="#00d000"/>
<rect x="773" y="297" width="1" height="1" fill="#00d000"/>
<rect x="774" y="297" width="1" height="1" fill="#00d000"/>
<rect x="777" y="297" width="1" height="1" fill="#00d000"/>
<rect x="778" y="297" width="1" height="1" fill="#00d000"/>
<rect x="779" y="297" width="1" height="1" fill="#00d000"/>
<rect x="782" y="297" width="1" height="1" fill="#00d000"/>
<rect x="783" y="297" width="1" height="1" fill="#00d000"/>
<rect x="784" y="297" width="1" height="1" fill="#00d000"/>
<rect x="787" y="297" width="1" height="1" fill="#00d000"/>
<rect x="788" y="297" width="1" height="1" fill="#00d000"/>
<rect x="789" y="297" width="1" height="1" fill="#00d000"/>
<rect x="792" y="297" width="1" height="1" fill="#00d000"/>
<rect x="793" y="297" width="1" height="1" fill="#00d000"/>
<rect x="794" y="297" width="1" height="1" fill="#00d000"/>
<rect x="797" y="297" width="1" height="1" fill="#00d000"/>
<rect x="798" y="297" width="1" height="1" fill="#00d000"/>
<rect x="799" y="297" width="1" height="1" fill="#00d000"/>
<rect x="802" y="297" width="1" height="1" fill="#00d000"/>
<rect x="803" y="297" width="1" height="1" fill="#00d000"/>
<rect x="804" y="297" width="1" height="1" fill="#00d000"/>
<rect x="807" y="297" width="1" height="1" fill="#00d000"/>
<rect x="808" y="297" width="1" height="1" fill="#00d000"/>
<rect x="809" y="297" width="1" height="1" fill="#00d000"/>
<rect x="812" y="297" width="1" height="1" fill="#00d000"/>
<rect x="813" y="297" width="1" height="1" fill="#00d000"/>
<rect x="814" y="297" width="1" height="1" fill="#00d000"/>
<rect x="817" y="297" width="1" height="1" fill="#00d000"/>
<rect x="818" y="297" width="1" height="1" fill="#00d000"/>
<rect x="819" y="297" width="1" height="1" fill="#00d000"/>
<rect x="822" y="297" width="1" height="1" fill="#00d000"/>
<rect x="823" y="297" width="1" height="1" fill="#00d000"/>
<rect x="824" y="297" width="1" height="1" fill="#00d000"/>
<rect x="827" y="297" width="1" height="1" fill="#00d000"/>
<rect x="828" y="297" width="1" height="1" fill="#00d000"/>
<rect x="829" y="297" width="1" height="1" fill="#00d000"/>
<rect x="832" y="297" width="1" height="1" fill="#00d000"/>
<rect x="833" y="297" width="1" height="1" fill="#00d000"/>
<rect x="834" y="297" width="1" height="1" fill="#00d000"/>
<rect x="837" y="297" width="1" height="1" fill="#00d000"/>
<rect x="838" y="297" width="1" height="1" fill="#00d000"/>
<rect x="839" y="297" width="1" height="1" fill="#00d000"/>
<rect x="842" y="297" width="1" height="1" fill="#00d000"/>
<rect x="843" y="297" width="1" height="1" fill="#00d000"/>
<rect x="844" y="297" width="1" height="1" fill="#00d000"/>
<rect x="847" y="297" width="1" height="1" fill="#00d000"/>
<rect x="848" y="297" width="1" height="1" fill="#00d000"/>
<rect x="849" y="297" width="1" height="1" fill="#00d000"/>
<rect x="852" y="297" width="1" height="1" fill="#00d000"/>
<rect x="853" y="297" width="1" height="1" fill="#00d000"/>
<rect x="854" y="297" width="1" height="1" fill="#00d000"/>
<rect x="857" y="297" width="1" height="1" fill="#00d000"/>
<rect x="858" y="297" width="1" height="1" fill="#00d000"/>
<rect x="859" y="297" width="1" height="1" fill="#00d000"/>
<rect x="862" y="297" width="1" height="1" fill="#00d000"/>
<rect x="863" y="297" width="1" height="1" fill="#00d000"/>
<rect x="864" y="297" width="1" height="1" fill="#00d000"/>
<rect x="867" y="297" width="1" height="1" fill="#00d000"/>
<rect x="868" y="297" width="1" height="1" fill="#00d000"/>
<rect x="869" y="297" width="1" height="1" fill="#00d000"/>
<rect x="872" y="297" width="1" height="1" fill="#00d000"/>
<rect x="873" y="297" width="1" height="1" fill="#00d000"/>
<rect x="874" y="297" width="1" height="1" fill="#00d000"/>
<rect x="877" y="297" width="1" height="1" fill="#00d000"/>
<rect x="878" y="297" width="1" height="1" fill="#00d000"/>
<rect x="879" y="297" width="1" height="1" fill="#00d000"/>
<rect x="882" y="297" width="1" height="1" fill="#00d000"/>
<rect x="883" y="297" width="1" height="1" fill="#00d000"/>
<rect x="884" y="297" width="1" height="1" fill="#00d000"/>
<rect x="887" y="297" width="1" height="1" fill="#00d000"/>
<rect x="888" y="297" width="1" height="1" fill="#00d000"/>
<rect x="889" y="297" width="1" height="1" fill="#00d000"/>
<rect x="892" y="297" width="1" height="1" fill="#00d000"/>
<rect x="893" y="297" width="1" height="1" fill="#00d000"/>
<rect x="894" y="297" width="1" height="1" fill="#00d000"/>
<rect x="897" y="297" width="1" height="1" fill="#00d000"/>
<rect x="898" y="297" width="1" height="1" fill="#00d000"/>
<rect x="899" y="297" width="1" height="1" fill="#00d000"/>
<rect x="902" y="297" width="1" height="1" fill="#00d000"/>
<rect x="903" y="297" width="1" height="1" fill="#00d000"/>
<rect x="904" y="297" width="1" height="1" fill="#00d000"/>
<rect x="907" y="297" width="1" height="1" fill="#00d000"/>
<rect x="908" y="297" width="1" height="1" fill="#00d000"/>
<rect x="909" y="297" width="1" height="1" fill="#00d000"/>
<rect x="912" y="297" width="1" height="1" fill="#00d000"/>
<rect x="913" y="297" width="1" height="1" fill="#00d000"/>
<rect x="914" y="297" width="1" height="1" fill="#00d000"/>
<rect x="917" y="297" width="1" height="1" fill="#00d000"/>
<rect x="918" y="297" width="1" height="1" fill="#00d000"/>
<rect x="919" y="297" width="1" height="1" fill="#00d000"/>
<rect x="922" y="297" width="1" height="1" fill="#00d000"/>
<rect x="923" y="297" width="1" height="1" fill="#00d000"/>
<rect x="924" y="297" width="1" height="1" fill="#00d000"/>
<rect x="927" y="297" width="1" height="1" fill="#00d000"/>
<rect x="928" y="297" width="1" height="1" fill="#00d000"/>
<rect x="929" y="297" width="1" height="1" fill="#00d000"/>
<rect x="932" y="297" width="1" height="1" fill="#00d000"/>
<rect x="933" y="297" width="1" height="1" fill="#00d000"/>
<rect x="934" y="297" width="1" height="1" fill="#00d000"/>
<rect x="937" y="297" width="1" height="1" fill="#00d000"/>
<rect x="938" y="297" width="1" height="1" fill="#00d000"/>
<rect x="939" y="297" width="1" height="1" fill="#00d000"/>
<rect x="942" y="297" width="1" height="1" fill="#00d000"/>
<rect x="943" y="297" width="1" height="1" fill="#00d000"/>
<rect x="944" y="297" width="1" height="1" fill="#00d000"/>
<rect x="947" y="297" width="1" height="1" fill="#00d000"/>
<rect x="948" y="297" width="1" height="1" fill="#00d000"/>
<rect x="949" y="297" width="1" height="1" fill="#00d000"/>
<rect x="952" y="297" width="1" height="1" fill="#00d000"/>
<rect x="953" y="297" width="1" height="1" fill="#00d000"/>
<rect x="954" y="297" width="1" height="1" fill="#00d000"/>
<rect x="957" y="297" width="1" height="1" fill="#00d000"/>
<rect x="958" y="297" width="1" height="1" fill="#00d000"/>
<rect x="959" y="297" width="1" height="1" fill="#00d000"/>
<rect x="962" y="297" width="1" height="1" fill="#00d000"/>
<rect x="963" y="297" width="1" height="1" fill="#00d000"/>
<rect x="964" y="297" width="1" height="1" fill="#00d000"/>
<rect x="967" y="297" width="1" height="1" fill="#00d000"/>
<rect x="968" y="297" width="1" height="1" fill="#00d000"/>
<rect x="969" y="297" width="1" height="1" fill="#00d000"/>
<rect x="972" y="297" width="1" height="1" fill="#00d000"/>
<rect x="973" y="297" width="1" height="1" fill="#00d000"/>
<rect x="974" y="297" width="1" height="1" fill="#00d000"/>
<rect x="977" y="297" width="1" height="1" fill="#00d000"/>
<rect x="978" y="297" width="1" height="1" fill="#00d000"/>
<rect x="979" y="297" width="1" height="1" fill="#00d000"/>
<rect x="982" y="297" width="1" height="1" fill="#00d000"/>
<rect x="983" y="297" width="1" height="1" fill="#00d000"/>
<rect x="984" y="297" width="1" height="1" fill="#00d000"/>
<rect x="987" y="297" width="1" height="1" fill="#00d000"/>
<rect x="988" y="297" width="1" height="1" fill="#00d000"/>
<rect x="989" y="297" width="1" height="1" fill="#00d000"/>
<rect x="992" y="297" width="1" height="1" fill="#00d000"/>
<rect x="993" y="297" width="1" height="1" fill="#00d000"/>
<rect x="994" y="297" width="1" height="1" fill="#00d000"/>
<rect x="997" y="297" width="1" height="1" fill="#00d000"/>
<rect x="998" y="297" width="1" height="1" fill="#00d000"/>
<rect x="999" y="297" width="1" height="1" fill="#00d000"/>
<rect x="1002" y="297" width="1" height="1" fill="#00d000"/>
<rect x="1003" y="297" width="1" height="1" fill="#00d000"/>
<rect x="1004" y="297" width="1" height="1" fill="#00d000"/>
<rect x="1007" y="297" width="1" height="1" fill="#00d000"/>
<rect x="1008" y="297" width="1" height="1" fill="#00d000"/>
<rect x="1009" y="297" width="1" height="1" fill="#00d000"/>
<rect x="1012" y="297" width="1" height="1" fill="#00d000"/>
<rect x="1013" y="297" width="1" height="1" fill="#00d000"/>
<rect x="1014" y="297" width="1" height="1" fill="#00d000"/>
<rect x="17" y="339" width="999" height="7" fill="#00ec00"/>
<rect x="18" y="336" width="1" height="3" fill="#00ec00"/>
<rect x="19" y="337" width="3" height="2" fill="#00ec00"/>
<rect x="23" y="336" width="1" height="3" fill="#00ec00"/>
<rect x="26" y="337" width="1" height="2" fill="#00ec00"/>
<rect x="36" y="336" width="1" height="3" fill="#00ec00"/>
<rect x="42" y="336" width="1" height="3" fill="#00ec00"/>
<rect x="45" y="337" width="1" height="2" fill="#00ec00"/>
<rect x="54" y="336" width="1" height="3" fill="#00ec00"/>
<rect x="58" y="336" width="4" height="3" fill="#00ec00"/>
<rect x="68" y="336" width="1" height="3" fill="#00ec00"/>
<rect x="71" y="336" width="2" height="3" fill="#00ec00"/>
<rect x="73" y="337" width="1" height="2" fill="#00ec00"/>
<rect x="83" y="336" width="1" height="3" fill="#00ec00"/>
<rect x="84" y="337" width="1" height="2" fill="#00ec00"/>
<rect x="85" y="336" width="1" height="3" fill="#00ec00"/>
<rect x="88" y="336" width="2" height="3" fill="#00ec00"/>
<rect x="92" y="337" width="1" height="2" fill="#00ec00"/>
<rect x="96" y="336" width="1" height="3" fill="#00ec00"/>
<rect x="97" y="337" width="1" height="2" fill="#00ec00"/>
<rect x="104" y="337" width="1" height="2" fill="#00ec00"/>
<rect x="107" y="337" width="1" height="2" fill="#00ec00"/>
<rect x="111" y="336" width="1" height="3" fill="#00ec00"/>
<rect x="114" y="336" width="1" height="3" fill="#00ec00"/>
<rect x="119" y="336" width="4" height="3" fill="#00ec00"/>
<rect x="125" y="337" width="1" height="2" fill="#00ec00"/>
<rect x="127" y="336" width="1" height="3" fill="#00ec00"/>
<rect x="129" y="336" width="1" height="3" fill="#00ec00"/>
<rect x="131" y="337" width="1" height="2" fill="#00ec00"/>
<rect x="132" y="336" width="1" height="3" fill="#00ec00"/>
<rect x="136" y="336" width="8" height="3" fill="#00ec00"/>
<rect x="144" y="337" width="1" height="2" fill="#00ec00"/>
<rect x="145" y="336" width="1" height="3" fill="#00ec00"/>
<rect x="146" y="337" width="1" height="2" fill="#00ec00"/>
<rect x="147" y="336" width="1" height="3" fill="#00ec00"/>
<rect x="158" y="337" width="1" height="2" fill="#00ec00"/>
<rect x="164" y="336" width="1" height="3" fill="#00ec00"/>
<rect x="167" y="336" width="1" height="3" fill="#00ec00"/>
<rect x="172" y="336" width="1" height="3" fill="#00ec00"/>
<rect x="174" y="336" width="4" height="3" fill="#00ec00"/>
<rect x="180" y="336" width="1" height="3" fill="#00ec00"/>
<rect x="184" y="336" width="8" height="3" fill="#00ec00"/>
<rect x="195" y="336" width="1" height="3" fill="#00ec00"/>
<rect x="196" y="337" width="1" height="2" fill="#00ec00"/>
<rect x="198" y="336" width="1" height="3" fill="#00ec00"/>
<rect x="201" y="336" width="1" height="3" fill="#00ec00"/>
<rect x="205" y="336" width="6" height="3" fill="#00ec00"/>
<rect x="211" y="335" width="1" height="4" fill="#00ec00"/>
<rect x="212" y="334" width="1" height="5" fill="#00ec00"/>
<rect x="213" y="335" width="1" height="4" fill="#00ec00"/>
<rect x="214" y="334" width="1" height="5" fill="#00ec00"/>
<rect x="216" y="334" width="1" height="5" fill="#00ec00"/>
<rect x="217" y="335" width="1" height="4" fill="#00ec00"/>
<rect x="218" y="336" width="1" height="3" fill="#00ec00"/>
<rect x="224" y="337" width="3" height="2" fill="#00ec00"/>
<rect x="227" y="336" width="4" height="3" fill="#00ec00"/>
<rect x="235" y="336" width="1" height="3" fill="#00ec00"/>
<rect x="237" y="336" width="1" height="3" fill="#00ec00"/>
<rect x="239" y="336" width="1" height="3" fill="#00ec00"/>
<rect x="244" y="336" width="1" height="3" fill="#00ec00"/>
<rect x="246" y="336" width="3" height="3" fill="#00ec00"/>
<rect x="253" y="337" width="1" height="2" fill="#00ec00"/>
<rect x="254" y="336" width="3" height="3" fill="#00ec00"/>
<rect x="259" y="336" width="1" height="3" fill="#00ec00"/>
<rect x="260" y="337" width="1" height="2" fill="#00ec00"/>
<rect x="261" y="336" width="1" height="3" fill="#00ec00"/>
<rect x="264" y="336" width="1" height="3" fill="#00ec00"/>
<rect x="267" y="336" width="3" height="3" fill="#00ec00"/>
<rect x="276" y="336" width="3" height="3" fill="#00ec00"/>
<rect x="280" y="336" width="1" height="3" fill="#00ec00"/>
<rect x="282" y="336" width="1" height="3" fill="#00ec00"/>
<rect x="284" y="337" width="3" height="2" fill="#00ec00"/>
<rect x="288" y="336" width="4" height="3" fill="#00ec00"/>
<rect x="296" y="336" width="5" height="3" fill="#00ec00"/>
<rect x="301" y="337" width="1" height="2" fill="#00ec00"/>
<rect x="302" y="336" width="7" height="3" fill="#00ec00"/>
<rect x="312" y="336" width="1" height="3" fill="#00ec00"/>
<rect x="318" y="336" width="1" height="3" fill="#00ec00"/>
<rect x="320" y="336" width="2" height="3" fill="#00ec00"/>
<rect x="322" y="337" width="3" height="2" fill="#00ec00"/>
<rect x="326" y="337" width="1" height="2" fill="#00ec00"/>
<rect x="329" y="336" width="2" height="3" fill="#00ec00"/>
<rect x="334" y="336" width="1" height="3" fill="#00ec00"/>
<rect x="338" y="336" width="1" height="3" fill="#00ec00"/>
<rect x="344" y="337" width="2" height="2" fill="#00ec00"/>
<rect x="346" y="336" width="1" height="3" fill="#00ec00"/>
<rect x="349" y="336" width="1" height="3" fill="#00ec00"/>
<rect x="352" y="336" width="3" height="3" fill="#00ec00"/>
<rect x="356" y="336" width="1" height="3" fill="#00ec00"/>
<rect x="361" y="336" width="3" height="3" fill="#00ec00"/>
<rect x="366" y="336" width="1" height="3" fill="#00ec00"/>
<rect x="370" y="336" width="3" height="3" fill="#00ec00"/>
<rect x="375" y="336" width="1" height="3" fill="#00ec00"/>
<rect x="383" y="336" width="1" height="3" fill="#00ec00"/>
<rect x="387" y="336" width="3" height="3" fill="#00ec00"/>
<rect x="393" y="336" width="1" height="3" fill="#00ec00"/>
<rect x="395" y="336" width="1" height="3" fill="#00ec00"/>
<rect x="397" y="336" width="2" height="3" fill="#00ec00"/>
<rect x="403" y="336" width="1" height="3" fill="#00ec00"/>
<rect x="405" y="336" width="4" height="3" fill="#00ec00"/>
<rect x="411" y="336" width="2" height="3" fill="#00ec00"/>
<rect x="419" y="334" width="1" height="5" fill="#00ec00"/>
<rect x="427" y="334" width="1" height="5" fill="#00ec00"/>
<rect x="429" y="334" width="1" height="5" fill="#00ec00"/>
<rect x="430" y="336" width="1" height="3" fill="#00ec00"/>
<rect x="431" y="334" width="2" height="5" fill="#00ec00"/>
<rect x="433" y="336" width="2" height="3" fill="#00ec00"/>
<rect x="435" y="334" width="1" height="5" fill="#00ec00"/>
<rect x="436" y="336" width="1" height="3" fill="#00ec00"/>
<rect x="438" y="336" width="1" height="3" fill="#00ec00"/>
<rect x="439" y="337" width="1" height="2" fill="#00ec00"/>
<rect x="443" y="336" width="1" height="3" fill="#00ec00"/>
<rect x="446" y="336" width="1" height="3" fill="#00ec00"/>
<rect x="458" y="336" width="1" height="3" fill="#00ec00"/>
<rect x="459" y="337" width="1" height="2" fill="#00ec00"/>
<rect x="465" y="336" width="1" height="3" fill="#00ec00"/>
<rect x="467" y="336" width="2" height="3" fill="#00ec00"/>
<rect x="469" y="337" width="1" height="2" fill="#00ec00"/>
<rect x="470" y="336" width="2" height="3" fill="#00ec00"/>
<rect x="474" y="336" width="1" height="3" fill="#00ec00"/>
<rect x="478" y="336" width="1" height="3" fill="#00ec00"/>
<rect x="480" y="336" width="1" height="3" fill="#00ec00"/>
<rect x="484" y="337" width="3" height="2" fill="#00ec00"/>
<rect x="489" y="337" width="1" height="2" fill="#00ec00"/>
<rect x="490" y="336" width="1" height="3" fill="#00ec00"/>
<rect x="492" y="336" width="1" height="3" fill="#00ec00"/>
<rect x="499" y="336" width="1" height="3" fill="#00ec00"/>
<rect x="501" y="336" width="1" height="3" fill="#00ec00"/>
<rect x="508" y="336" width="1" height="3" fill="#00ec00"/>
<rect x="510" y="336" width="1" height="3" fill="#00ec00"/>
<rect x="512" y="336" width="1" height="3" fill="#00ec00"/>
<rect x="519" y="336" width="4" height="3" fill="#00ec00"/>
<rect x="525" y="336" width="3" height="3" fill="#00ec00"/>
<rect x="532" y="336" width="1" height="3" fill="#00ec00"/>
<rect x="534" y="336" width="1" height="3" fill="#00ec00"/>
<rect x="538" y="336" width="4" height="3" fill="#00ec00"/>
<rect x="543" y="337" width="1" height="2" fill="#00ec00"/>
<rect x="549" y="337" width="1" height="2" fill="#00ec00"/>
<rect x="550" y="336" width="4" height="3" fill="#00ec00"/>
<rect x="557" y="336" width="3" height="3" fill="#00ec00"/>
<rect x="561" y="336" width="1" height="3" fill="#00ec00"/>
<rect x="568" y="336" width="2" height="3" fill="#00ec00"/>
<rect x="570" y="337" width="1" height="2" fill="#00ec00"/>
<rect x="572" y="336" width="3" height="3" fill="#00ec00"/>
<rect x="576" y="336" width="1" height="3" fill="#00ec00"/>
<rect x="582" y="336" width="1" height="3" fill="#00ec00"/>
<rect x="584" y="336" width="1" height="3" fill="#00ec00"/>
<rect x="586" y="336" width="1" height="3" fill="#00ec00"/>
<rect x="589" y="337" width="1" height="2" fill="#00ec00"/>
<rect x="592" y="336" width="1" height="3" fill="#00ec00"/>
<rect x="597" y="337" width="1" height="2" fill="#00ec00"/>
<rect x="600" y="336" width="1" height="3" fill="#00ec00"/>
<rect x="602" y="336" width="1" height="3" fill="#00ec00"/>
<rect x="606" y="336" width="2" height="3" fill="#00ec00"/>
<rect x="609" y="336" width="8" height="3" fill="#00ec00"/>
<rect x="617" y="338" width="1" height="1" fill="#00ec00"/>
<rect x="618" y="336" width="12" height="3" fill="#00ec00"/>
<rect x="634" y="336" width="1" height="3" fill="#00ec00"/>
<rect x="637" y="336" width="1" height="3" fill="#00ec00"/>
<rect x="642" y="336" width="3" height="3" fill="#00ec00"/>
<rect x="653" y="336" width="1" height="3" fill="#00ec00"/>
<rect x="655" y="336" width="1" height="3" fill="#00ec00"/>
<rect x="662" y="336" width="1" height="3" fill="#00ec00"/>
<rect x="663" y="337" width="1" height="2" fill="#00ec00"/>
<rect x="666" y="336" width="1" height="3" fill="#00ec00"/>
<rect x="670" y="336" width="3" height="3" fill="#00ec00"/>
<rect x="674" y="331" width="1" height="8" fill="#00ec00"/>
<rect x="675" y="336" width="1" height="3" fill="#00ec00"/>
<rect x="676" y="338" width="1" height="1" fill="#00ec00"/>
<rect x="677" y="336" width="1" height="3" fill="#00ec00"/>
<rect x="679" y="336" width="1" height="3" fill="#00ec00"/>
<rect x="683" y="334" width="1" height="5" fill="#00ec00"/>
<rect x="692" y="336" width="1" height="3" fill="#00ec00"/>
<rect x="700" y="336" width="1" height="3" fill="#00ec00"/>
<rect x="705" y="336" width="1" height="3" fill="#00ec00"/>
<rect x="713" y="336" width="1" height="3" fill="#00ec00"/>
<rect x="718" y="337" width="1" height="2" fill="#00ec00"/>
<rect x="720" y="336" width="1" height="3" fill="#00ec00"/>
<rect x="721" y="337" width="1" height="2" fill="#00ec00"/>
<rect x="726" y="336" width="1" height="3" fill="#00ec00"/>
<rect x="729" y="336" width="1" height="3" fill="#00ec00"/>
<rect x="731" y="336" width="1" height="3" fill="#00ec00"/>
<rect x="742" y="336" width="2" height="3" fill="#00ec00"/>
<rect x="747" y="336" width="5" height="3" fill="#00ec00"/>
<rect x="755" y="336" width="15" height="3" fill="#00ec00"/>
<rect x="775" y="337" width="1" height="2" fill="#00ec00"/>
<rect x="787" y="336" width="1" height="3" fill="#00ec00"/>
<rect x="791" y="337" width="3" height="2" fill="#00ec00"/>
<rect x="803" y="336" width="1" height="3" fill="#00ec00"/>
<rect x="807" y="336" width="1" height="3" fill="#00ec00"/>
<rect x="813" y="336" width="3" height="3" fill="#00ec00"/>
<rect x="818" y="336" width="1" height="3" fill="#00ec00"/>
<rect x="820" y="337" width="1" height="2" fill="#00ec00"/>
<rect x="821" y="336" width="1" height="3" fill="#00ec00"/>
<rect x="822" y="337" width="1" height="2" fill="#00ec00"/>
<rect x="823" y="336" width="1" height="3" fill="#00ec00"/>
<rect x="826" y="336" width="2" height="3" fill="#00ec00"/>
<rect x="830" y="337" width="1" height="2" fill="#00ec00"/>
<rect x="831" y="336" width="1" height="3" fill="#00ec00"/>
<rect x="835" y="336" width="3" height="3" fill="#00ec00"/>
<rect x="838" y="337" width="1" height="2" fill="#00ec00"/>
<rect x="839" y="336" width="8" height="3" fill="#00ec00"/>
<rect x="852" y="336" width="3" height="3" fill="#00ec00"/>
<rect x="858" y="336" width="1" height="3" fill="#00ec00"/>
<rect x="861" y="336" width="1" height="3" fill="#00ec00"/>
<rect x="864" y="336" width="1" height="3" fill="#00ec00"/>
<rect x="867" y="336" width="1" height="3" fill="#00ec00"/>
<rect x="868" y="337" width="1" height="2" fill="#00ec00"/>
<rect x="869" y="336" width="1" height="3" fill="#00ec00"/>
<rect x="870" y="337" width="1" height="2" fill="#00ec00"/>
<rect x="872" y="336" width="1" height="3" fill="#00ec00"/>
<rect x="874" y="336" width="3" height="3" fill="#00ec00"/>
<rect x="882" y="336" width="2" height="3" fill="#00ec00"/>
<rect x="884" y="337" width="1" height="2" fill="#00ec00"/>
<rect x="885" y="334" width="4" height="5" fill="#00ec00"/>
<rect x="889" y="336" width="1" height="3" fill="#00ec00"/>
<rect x="890" y="335" width="1" height="4" fill="#00ec00"/>
<rect x="891" y="336" width="1" height="3" fill="#00ec00"/>
<rect x="892" y="334" width="1" height="5" fill="#00ec00"/>
<rect x="893" y="336" width="1" height="3" fill="#00ec00"/>
<rect x="894" y="334" width="1" height="5" fill="#00ec00"/>
<rect x="897" y="336" width="1" height="3" fill="#00ec00"/>
<rect x="902" y="336" width="1" height="3" fill="#00ec00"/>
<rect x="905" y="336" width="2" height="3" fill="#00ec00"/>
<rect x="907" y="337" width="1" height="2" fill="#00ec00"/>
<rect x="908" y="336" width="1" height="3" fill="#00ec00"/>
<rect x="910" y="336" width="4" height="3" fill="#00ec00"/>
<rect x="914" y="337" width="1" height="2" fill="#00ec00"/>
<rect x="915" y="336" width="2" height="3" fill="#00ec00"/>
<rect x="924" y="337" width="3" height="2" fill="#00ec00"/>
<rect x="927" y="336" width="1" height="3" fill="#00ec00"/>
<rect x="929" y="336" width="1" height="3" fill="#00ec00"/>
<rect x="931" y="336" width="3" height="3" fill="#00ec00"/>
<rect x="937" y="337" width="1" height="2" fill="#00ec00"/>
<rect x="938" y="336" width="1" height="3" fill="#00ec00"/>
<rect x="939" y="337" width="1" height="2" fill="#00ec00"/>
<rect x="941" y="336" width="1" height="3" fill="#00ec00"/>
<rect x="952" y="336" width="1" height="3" fill="#00ec00"/>
<rect x="957" y="336" width="1" height="3" fill="#00ec00"/>
<rect x="960" y="336" width="1" height="3" fill="#00ec00"/>
<rect x="962" y="336" width="1" height="3" fill="#00ec00"/>
<rect x="965" y="336" width="1" height="3" fill="#00ec00"/>
<rect x="972" y="336" width="1" height="3" fill="#00ec00"/>
<rect x="981" y="336" width="3" height="3" fill="#00ec00"/>
<rect x="1002" y="336" width="2" height="3" fill="#00ec00"/>
<rect x="1005" y="336" width="2" height="3" fill="#00ec00"/>
<rect x="1013" y="336" width="3" height="3" fill="#00ec00"/>
<rect x="20" y="340" width="1" height="1" fill="#009800"/>
<rect x="31" y="339" width="1" height="1" fill="#009800"/>
<rect x="38" y="344" width="1" height="1" fill="#009800"/>
<rect x="42" y="341" width="1" height="2" fill="#009800"/>
<rect x="78" y="340" width="1" height="1" fill="#009800"/>
<rect x="86" y="341" width="1" height="1" fill="#009800"/>
<rect x="98" y="344" width="1" height="2" fill="#009800"/>
<rect x="101" y="344" width="1" height="2" fill="#009800"/>
<rect x="106" y="341" width="1" height="1" fill="#009800"/>
<rect x="137" y="341" width="1" height="1" fill="#009800"/>
<rect x="174" y="344" width="1" height="1" fill="#009800"/>
<rect x="180" y="344" width="1" height="1" fill="#009800"/>
<rect x="199" y="342" width="1" height="1" fill="#009800"/>
<rect x="200" y="341" width="1" height="1" fill="#009800"/>
<rect x="209" y="339" width="1" height="1" fill="#009800"/>
<rect x="212" y="344" width="1" height="1" fill="#009800"/>
<rect x="220" y="339" width="1" height="2" fill="#009800"/>
<rect x="226" y="344" width="1" height="1" fill="#009800"/>
<rect x="227" y="342" width="1" height="1" fill="#009800"/>
<rect x="246" y="343" width="1" height="2" fill="#009800"/>
<rect x="250" y="340" width="1" height="1" fill="#009800"/>
<rect x="266" y="343" width="1" height="2" fill="#009800"/>
<rect x="283" y="341" width="1" height="2" fill="#009800"/>
<rect x="292" y="344" width="1" height="1" fill="#009800"/>
<rect x="302" y="340" width="1" height="1" fill="#009800"/>
<rect x="305" y="344" width="1" height="2" fill="#009800"/>
<rect x="319" y="343" width="1" height="2" fill="#009800"/>
<rect x="328" y="342" width="1" height="2" fill="#009800"/>
<rect x="329" y="342" width="1" height="1" fill="#009800"/>
<rect x="346" y="340" width="1" height="1" fill="#009800"/>
<rect x="348" y="343" width="1" height="1" fill="#009800"/>
<rect x="353" y="340" width="1" height="2" fill="#009800"/>
<rect x="361" y="341" width="1" height="1" fill="#009800"/>
<rect x="372" y="344" width="1" height="1" fill="#009800"/>
<rect x="379" y="339" width="1" height="1" fill="#009800"/>
<rect x="392" y="341" width="1" height="1" fill="#009800"/>
<rect x="395" y="339" width="1" height="1" fill="#009800"/>
<rect x="406" y="341" width="1" height="2" fill="#009800"/>
<rect x="410" y="340" width="1" height="1" fill="#009800"/>
<rect x="426" y="341" width="1" height="1" fill="#009800"/>
<rect x="431" y="343" width="1" height="1" fill="#009800"/>
<rect x="450" y="341" width="1" height="2" fill="#009800"/>
<rect x="459" y="344" width="1" height="1" fill="#009800"/>
<rect x="471" y="340" width="1" height="2" fill="#009800"/>
<rect x="489" y="339" width="1" height="1" fill="#009800"/>
<rect x="494" y="340" width="1" height="2" fill="#009800"/>
<rect x="495" y="340" width="1" height="2" fill="#009800"/>
<rect x="496" y="339" width="1" height="2" fill="#009800"/>
<rect x="511" y="342" width="1" height="1" fill="#009800"/>
<rect x="512" y="343" width="1" height="1" fill="#009800"/>
<rect x="518" y="341" width="1" height="2" fill="#009800"/>
<rect x="525" y="340" width="1" height="1" fill="#009800"/>
<rect x="540" y="344" width="1" height="1" fill="#009800"/>
<rect x="550" y="341" width="1" height="1" fill="#009800"/>
<rect x="554" y="339" width="1" height="2" fill="#009800"/>
<rect x="556" y="343" width="1" height="1" fill="#009800"/>
<rect x="566" y="344" width="1" height="1" fill="#009800"/>
<rect x="575" y="344" width="1" height="2" fill="#009800"/>
<rect x="576" y="344" width="1" height="1" fill="#009800"/>
<rect x="585" y="339" width="1" height="1" fill="#009800"/>
<rect x="602" y="339" width="1" height="1" fill="#009800"/>
<rect x="609" y="340" width="1" height="2" fill="#009800"/>
<rect x="617" y="339" width="1" height="1" fill="#009800"/>
<rect x="619" y="341" width="1" height="1" fill="#009800"/>
<rect x="634" y="340" width="1" height="2" fill="#009800"/>
<rect x="639" y="341" width="1" height="1" fill="#009800"/>
<rect x="662" y="339" width="1" height="1" fill="#009800"/>
<rect x="667" y="344" width="1" height="1" fill="#009800"/>
<rect x="684" y="343" width="1" height="2" fill="#009800"/>
<rect x="695" y="344" width="1" height="2" fill="#009800"/>
<rect x="701" y="344" width="1" height="2" fill="#009800"/>
<rect x="741" y="342" width="1" height="1" fill="#009800"/>
<rect x="752" y="342" width="1" height="1" fill="#009800"/>
<rect x="767" y="340" width="1" height="1" fill="#009800"/>
<rect x="769" y="340" width="1" height="1" fill="#009800"/>
<rect x="775" y="344" width="1" height="1" fill="#009800"/>
<rect x="782" y="342" width="1" height="1" fill="#009800"/>
<rect x="799" y="342" width="1" height="1" fill="#009800"/>
<rect x="812" y="342" width="1" height="1" fill="#009800"/>
<rect x="815" y="340" width="1" height="2" fill="#009800"/>
<rect x="823" y="339" width="1" height="2" fill="#009800"/>
<rect x="826" y="340" width="1" height="2" fill="#009800"/>
<rect x="837" y="344" width="1" height="1" fill="#009800"/>
<rect x="844" y="342" width="1" height="1" fill="#009800"/>
<rect x="869" y="339" width="1" height="1" fill="#009800"/>
<rect x="872" y="340" width="1" height="1" fill="#009800"/>
<rect x="881" y="342" width="1" height="2" fill="#009800"/>
<rect x="887" y="344" width="1" height="2" fill="#009800"/>
<rect x="901" y="339" width="1" height="1" fill="#009800"/>
<rect x="935" y="341" width="1" height="1" fill="#009800"/>
<rect x="940" y="342" width="1" height="1" fill="#009800"/>
<rect x="941" y="342" width="1" height="1" fill="#009800"/>
<rect x="956" y="340" width="1" height="1" fill="#009800"/>
<rect x="958" y="341" width="1" height="1" fill="#009800"/>
<rect x="965" y="343" width="1" height="1" fill="#009800"/>
<rect x="966" y="343" width="1" height="1" fill="#009800"/>
<rect x="970" y="343" width="1" height="2" fill="#009800"/>
<rect x="971" y="344" width="1" height="2" fill="#009800"/>
<rect x="985" y="340" width="1" height="1" fill="#009800"/>
<rect x="992" y="341" width="1" height="1" fill="#009800"/>
<rect x="1001" y="339" width="1" height="1" fill="#009800"/>
<rect x="1010" y="342" width="1" height="2" fill="#009800"/>
<rect x="1014" y="343" width="1" height="1" fill="#009800"/>
<polygon points="174.80,346 175.20,335 176.30,322 177.80,312 178.80,305 179.90,299 182.80,299 184.20,308 185.80,318 186.80,325 188.80,330 193.50,334 198.00,337.5 203.00,339 203.00,346" fill="#00ec00" shape-rendering="auto"/>
<polygon points="176.30,346 177.30,335 178.80,322 180.30,311 181.30,305 182.30,311 183.60,318 184.80,325 186.10,330 187.80,334 189.25,338 190.90,343 193.50,345 196.00,346" fill="#000" shape-rendering="auto"/>
<polygon points="634.30,346 634.70,335 635.80,322 637.30,312 638.30,305 639.40,299 642.30,299 643.70,308 645.30,318 646.30,325 648.30,330 653.00,334 657.50,337.5 662.50,339 662.50,346" fill="#00ec00" shape-rendering="auto"/>
<polygon points="635.80,346 636.80,335 638.30,322 639.80,311 640.80,305 641.80,311 643.10,318 644.30,325 645.60,330 647.30,334 648.75,338 650.40,343 653.00,345 655.50,346" fill="#000" shape-rendering="auto"/>
<polygon points="403.00,346 405.80,330 407.30,320 409.00,311 410.00,311 413.20,320 414.40,330 416.30,340 417.00,346" fill="#00ec00" shape-rendering="auto"/>
<polygon points="404.80,346 410.00,322.7 415.30,346" fill="#000" shape-rendering="auto"/>
<polygon points="862.50,346 864.20,330 865.80,320 867.50,314 868.50,314 871.25,320 873.20,330 876.30,340 877.00,346" fill="#00ec00" shape-rendering="auto"/>
<polygon points="864.00,346 868.50,322.7 874.50,346" fill="#000" shape-rendering="auto"/>
<rect x="20" y="345" width="1" height="1" fill="#002000"/>
<rect x="23" y="345" width="2" height="1" fill="#002000"/>
<rect x="28" y="345" width="4" height="1" fill="#002000"/>
<rect x="37" y="345" width="9" height="1" fill="#002000"/>
<rect x="50" y="345" width="3" height="1" fill="#002000"/>
<rect x="56" y="345" width="9" height="1" fill="#002000"/>
<rect x="89" y="345" width="6" height="1" fill="#002000"/>
<rect x="106" y="345" width="3" height="1" fill="#002000"/>
<rect x="142" y="345" width="6" height="1" fill="#002000"/>
<rect x="165" y="345" width="3" height="1" fill="#002000"/>
<rect x="173" y="345" width="2" height="1" fill="#002000"/>
<rect x="202" y="345" width="9" height="1" fill="#002000"/>
<rect x="227" y="345" width="4" height="1" fill="#002000"/>
<rect x="241" y="345" width="6" height="1" fill="#002000"/>
<rect x="252" y="345" width="9" height="1" fill="#002000"/>
<rect x="273" y="345" width="2" height="1" fill="#002000"/>
<rect x="280" y="345" width="3" height="1" fill="#002000"/>
<rect x="291" y="345" width="4" height="1" fill="#002000"/>
<rect x="318" y="345" width="2" height="1" fill="#002000"/>
<rect x="344" y="345" width="2" height="1" fill="#002000"/>
<rect x="361" y="345" width="9" height="1" fill="#002000"/>
<rect x="379" y="345" width="4" height="1" fill="#002000"/>
<rect x="410" y="345" width="3" height="1" fill="#002000"/>
<rect x="415" y="345" width="1" height="1" fill="#002000"/>
<rect x="442" y="345" width="4" height="1" fill="#002000"/>
<rect x="456" y="345" width="1" height="1" fill="#002000"/>
<rect x="460" y="345" width="9" height="1" fill="#002000"/>
<rect x="480" y="345" width="4" height="1" fill="#002000"/>
<rect x="499" y="345" width="9" height="1" fill="#002000"/>
<rect x="516" y="345" width="1" height="1" fill="#002000"/>
<rect x="529" y="345" width="3" height="1" fill="#002000"/>
<rect x="544" y="345" width="4" height="1" fill="#002000"/>
<rect x="550" y="345" width="9" height="1" fill="#002000"/>
<rect x="573" y="345" width="1" height="1" fill="#002000"/>
<rect x="590" y="345" width="6" height="1" fill="#002000"/>
<rect x="615" y="345" width="1" height="1" fill="#002000"/>
<rect x="627" y="345" width="1" height="1" fill="#002000"/>
<rect x="632" y="345" width="9" height="1" fill="#002000"/>
<rect x="646" y="345" width="4" height="1" fill="#002000"/>
<rect x="653" y="345" width="2" height="1" fill="#002000"/>
<rect x="662" y="345" width="1" height="1" fill="#002000"/>
<rect x="676" y="345" width="6" height="1" fill="#002000"/>
<rect x="700" y="345" width="4" height="1" fill="#002000"/>
<rect x="710" y="345" width="1" height="1" fill="#002000"/>
<rect x="715" y="345" width="3" height="1" fill="#002000"/>
<rect x="720" y="345" width="1" height="1" fill="#002000"/>
<rect x="726" y="345" width="4" height="1" fill="#002000"/>
<rect x="736" y="345" width="9" height="1" fill="#002000"/>
<rect x="750" y="345" width="1" height="1" fill="#002000"/>
<rect x="760" y="345" width="9" height="1" fill="#002000"/>
<rect x="771" y="345" width="6" height="1" fill="#002000"/>
<rect x="784" y="345" width="1" height="1" fill="#002000"/>
<rect x="802" y="345" width="4" height="1" fill="#002000"/>
<rect x="809" y="345" width="6" height="1" fill="#002000"/>
<rect x="820" y="345" width="2" height="1" fill="#002000"/>
<rect x="830" y="345" width="1" height="1" fill="#002000"/>
<rect x="833" y="345" width="6" height="1" fill="#002000"/>
<rect x="854" y="345" width="6" height="1" fill="#002000"/>
<rect x="865" y="345" width="4" height="1" fill="#002000"/>
<rect x="878" y="345" width="3" height="1" fill="#002000"/>
<rect x="892" y="345" width="4" height="1" fill="#002000"/>
<rect x="898" y="345" width="1" height="1" fill="#002000"/>
<rect x="904" y="345" width="9" height="1" fill="#002000"/>
<rect x="935" y="345" width="1" height="1" fill="#002000"/>
<rect x="953" y="345" width="9" height="1" fill="#002000"/>
<rect x="973" y="345" width="1" height="1" fill="#002000"/>
<rect x="977" y="345" width="1" height="1" fill="#002000"/>
<rect x="994" y="345" width="3" height="1" fill="#002000"/>
<rect x="1001" y="345" width="9" height="1" fill="#002000"/>
<rect x="17" y="346" width="999" height="2" fill="#139413"/>
<rect x="26" y="348" width="2" height="2" fill="#00ec00"/>
<rect x="36" y="348" width="1" height="2" fill="#00ec00"/>
<rect x="52" y="348" width="3" height="2" fill="#00ec00"/>
<rect x="67" y="348" width="2" height="2" fill="#00ec00"/>
<rect x="120" y="348" width="3" height="2" fill="#00ec00"/>
<rect x="141" y="348" width="2" height="2" fill="#00ec00"/>
<rect x="150" y="348" width="1" height="2" fill="#00ec00"/>
<rect x="152" y="348" width="2" height="2" fill="#00ec00"/>
<rect x="173" y="348" width="1" height="2" fill="#00ec00"/>
<rect x="300" y="348" width="1" height="2" fill="#00ec00"/>
<rect x="305" y="348" width="1" height="2" fill="#00ec00"/>
<rect x="315" y="348" width="1" height="2" fill="#00ec00"/>
<rect x="368" y="348" width="3" height="2" fill="#00ec00"/>
<rect x="372" y="348" width="2" height="2" fill="#00ec00"/>
<rect x="397" y="348" width="2" height="2" fill="#00ec00"/>
<rect x="404" y="348" width="1" height="2" fill="#00ec00"/>
<rect x="433" y="348" width="2" height="2" fill="#00ec00"/>
<rect x="498" y="348" width="1" height="2" fill="#00ec00"/>
<rect x="542" y="348" width="2" height="2" fill="#00ec00"/>
<rect x="557" y="348" width="1" height="2" fill="#00ec00"/>
<rect x="591" y="348" width="2" height="2" fill="#00ec00"/>
<rect x="595" y="348" width="1" height="2" fill="#00ec00"/>
<rect x="634" y="348" width="2" height="2" fill="#00ec00"/>
<rect x="646" y="348" width="1" height="2" fill="#00ec00"/>
<rect x="655" y="348" width="1" height="2" fill="#00ec00"/>
<rect x="676" y="348" width="1" height="2" fill="#00ec00"/>
<rect x="723" y="348" width="3" height="2" fill="#00ec00"/>
<rect x="736" y="348" width="3" height="2" fill="#00ec00"/>
<rect x="754" y="348" width="1" height="2" fill="#00ec00"/>
<rect x="760" y="348" width="2" height="2" fill="#00ec00"/>
<rect x="782" y="348" width="1" height="2" fill="#00ec00"/>
<rect x="800" y="348" width="2" height="2" fill="#00ec00"/>
<rect x="810" y="348" width="1" height="2" fill="#00ec00"/>
<rect x="813" y="348" width="1" height="2" fill="#00ec00"/>
<rect x="840" y="348" width="2" height="2" fill="#00ec00"/>
<rect x="845" y="348" width="2" height="2" fill="#00ec00"/>
<rect x="860" y="348" width="3" height="2" fill="#00ec00"/>
<rect x="865" y="348" width="1" height="2" fill="#00ec00"/>
<rect x="947" y="348" width="2" height="2" fill="#00ec00"/>
<rect x="950" y="348" width="1" height="2" fill="#00ec00"/>
<rect x="954" y="348" width="2" height="2" fill="#00ec00"/>
<polygon points="172.5,35.5 183.5,35.5 178,46" fill="#ffaa00" shape-rendering="auto"/>
<polygon points="995.5,308 1004.5,302.8 1004.5,313.2" fill="#00ec00" shape-rendering="auto"/>
<rect x="1004" y="307" width="15" height="2" fill="#00ec00"/>
<polygon points="22.5,344.5 22.5,354.5 29.8,349.5" fill="#00ec00" shape-rendering="auto"/>
<rect x="18" y="348" width="5" height="3" fill="#00ec00"/>
<circle cx="10.4" cy="349.5" r="8.7" fill="#00ec00" stroke="#ffa000" stroke-width="2.2" shape-rendering="auto"/>
<circle cx="116.5" cy="289" r="6" fill="#f5a000" shape-rendering="auto"/>
<circle cx="116.5" cy="338" r="6" fill="#f5a000" shape-rendering="auto"/>
</svg>
<div class="a" style="left:70px;top:310px;font-size:12px;color:#00dd00;line-height:14px;transform:scaleX(0.83);transform-origin:0 0">VOUT</div>
<div class="a" style="left:112px;top:281px;font-size:11px;font-weight:bold;color:#000;line-height:14px;width:9px;text-align:center">b</div>
<div class="a" style="left:112px;top:330px;font-size:11px;font-weight:bold;color:#000;line-height:14px;width:9px;text-align:center">a</div>
<div class="a" style="left:5.5px;top:343px;font-size:12px;color:#000;line-height:14px;width:9px;text-align:center">4</div>

<!-- bottom boxes -->
<div class="box" style="left:21px;top:674px;width:282px;height:24px"></div>
<div class="pill" style="left:30px;top:682px;width:32px"><b>C4</b></div>
<div class="a t12" style="left:67px;top:681px">200mV/div</div>
<div class="a" style="left:181px;top:681px;font-size:7px;font-weight:bold;color:#fff;line-height:7px">DC</div>
<div class="a" style="left:181px;top:688px;font-size:5px;font-weight:bold;color:#fff;line-height:5px">REJ</div>
<div class="a" style="left:215px;top:680px;font-size:10px;font-weight:bold;color:#fff;line-height:10px">B</div>
<div class="a t12" style="left:220px;top:683.5px;font-size:12px;transform:scaleX(0.82);transform-origin:0 0">W</div>
<div class="a t12" style="left:229px;top:681px">:1.0M</div>

<div class="box" style="left:306px;top:674px;width:136px;height:70px"></div>
<div class="a" style="left:352px;top:680px;width:86px;height:64px;border:1px solid #c8c8c8;border-bottom:none"></div>
<div class="a" style="left:352px;top:701px;width:86px;height:1px;background:#c8c8c8"></div>
<div class="a" style="left:352px;top:722px;width:86px;height:1px;background:#c8c8c8"></div>
<div class="pill" style="left:314px;top:683px;width:36px"><b>V1</b></div>
<div class="pill" style="left:314px;top:704px;width:36px"><b>V2</b></div>
<div class="pill" style="left:314px;top:725px;width:36px"><b>&#916;V</b></div>
<div class="a t12" style="left:355px;top:685px">7.88mV</div>
<div class="a t12" style="left:355px;top:706px">164.24mV</div>
<div class="a t12" style="left:355px;top:727px">156.36mV</div>

<div class="box" style="left:591px;top:674px;width:186px;height:24px"></div>
<div class="a" style="left:597px;top:681px;width:16px;height:15px;background:#c8c8d0;border:1px solid #ff9a00;font-size:11px;font-weight:bold;line-height:13px;text-align:center">A'</div>
<div class="pill" style="left:615px;top:682px;width:33px"><b>C4</b></div>
<svg width="1024" height="768"><path d="M650.5,692.5 L655,692.5 L661,682.5 L664.5,682.5" fill="none" stroke="#fff" stroke-width="2"/></svg>
<div class="a t12" style="left:668px;top:681px">132mV</div>

<div class="box" style="left:781px;top:674px;width:231px;height:93px"></div>
<div class="a t12" style="left:789px;top:681px">10.0&#956;s/div&nbsp; 2.5GS/s</div>
<div class="a t12" style="left:939px;top:681px">400ps/pt</div>
<div class="a t12" style="left:789px;top:702px;color:#ff1010">Stopped</div>
<div class="a t12" style="left:789px;top:723px">147 acqs</div>
<div class="a t12" style="left:929px;top:723px">RL:250k</div>
<div class="a t12" style="left:789px;top:744px">Auto</div>
<svg width="1024" height="768"><rect x="993" y="702" width="3" height="12" fill="#ffff20"/><circle cx="994.5" cy="715.5" r="3.5" fill="#ffff20"/></svg>
</body></html>
